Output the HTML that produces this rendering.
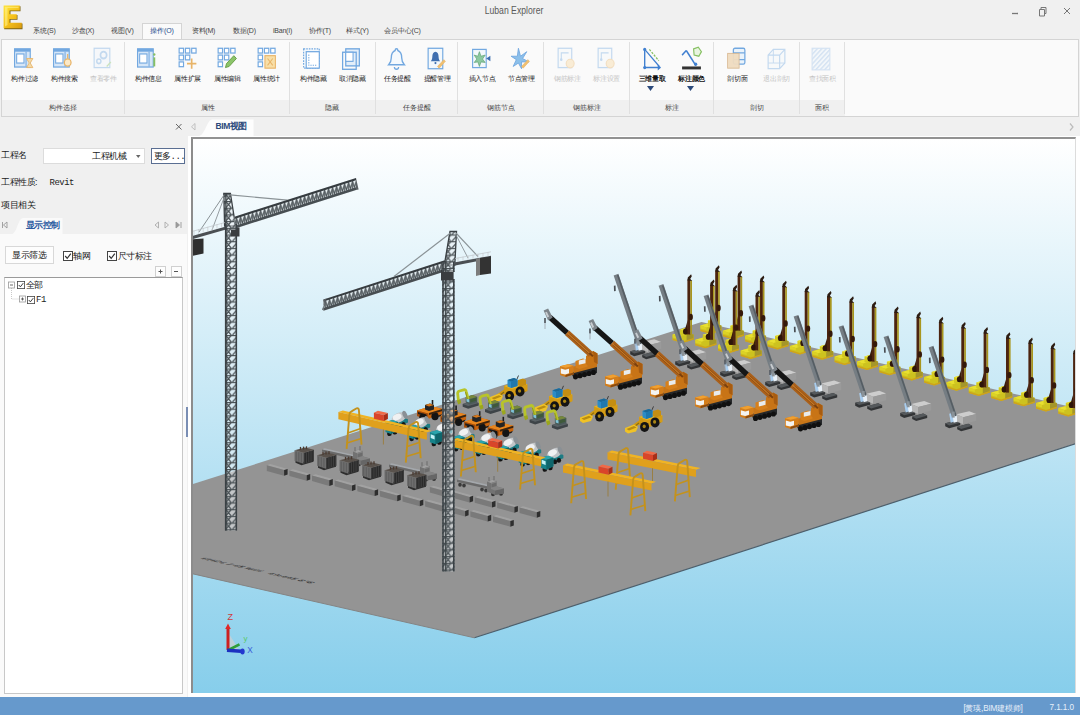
<!DOCTYPE html>
<html><head><meta charset="utf-8">
<style>
*{box-sizing:border-box;margin:0;padding:0}
html,body{width:1080px;height:715px;overflow:hidden;background:#f0f0f0;font-family:"Liberation Sans",sans-serif;font-size:9px;color:#333}
.abs{position:absolute}
#title{position:absolute;left:0;top:0;width:1080px;height:40px;background:#f0f0f0}
#title .t{position:absolute;left:464px;width:100px;top:5px;text-align:center;font-size:10.300px;color:#5a5a5a;transform:scaleX(.84);transform-origin:50% 50%;white-space:nowrap}
.menu{position:absolute;top:25px;height:12px;font-size:7px;color:#444;text-align:center;white-space:nowrap;width:44px;line-height:12px;letter-spacing:-0.200px}
#acttab{position:absolute;left:142px;top:23px;width:40px;height:18px;background:#fafafa;border:1px solid #d4d4d4;border-bottom:none}
#ribbon{position:absolute;left:1px;top:39px;width:1078px;height:78px;background:#fafafa;border:1px solid #d4d4d4}
#ribbon .strip{position:absolute;left:0;top:60px;height:16px;width:843px;background:#f0f0f0}
.sep{position:absolute;top:2px;width:1px;height:72px;background:#e0e0e0}
.btn{position:absolute;top:8px;width:40px;height:50px}
.btn svg{position:absolute;left:9.500px;top:-2px;width:23px;height:25px}
.btn .l{position:absolute;left:-5.500px;width:54px;top:25px;text-align:center;font-size:7px;color:#1c1c1c;white-space:nowrap;line-height:11px;letter-spacing:-0.350px}
.btn.dis .l{color:#c4c4c4}
.btn.dis svg{opacity:.4}
.gl{position:absolute;top:61.500px;width:60px;text-align:center;font-size:7px;color:#444;line-height:11px;white-space:nowrap;letter-spacing:0}
#tabrow{position:absolute;left:0;top:117px;width:1080px;height:19px;background:#f0f0f0}
#left{position:absolute;left:0;top:136px;width:187px;height:561px;background:#f0f0f0;font-family:"Liberation Sans",sans-serif}
.mono{font-family:"Liberation Mono",monospace}
#status{position:absolute;left:0;top:697px;width:1080px;height:18px;background:#6699cc;color:#e8f0fa;font-size:8px}
#vpwrap{position:absolute;left:188px;top:136px;width:892px;height:561px;background:#fff}
#vp{position:absolute;left:3px;top:1px;width:885px;height:555.5px;border-left:2px solid #8c8c8c;border-top:2px solid #929292;border-right:1px solid #dcdcdc;overflow:hidden}
</style></head><body>
<div id="title">
 <div class="t">Luban Explorer</div>
 <svg class="abs" style="left:3px;top:5px" width="21" height="25" viewBox="0 0 21 25">
<defs><linearGradient id="lg" x1="0" y1="0" x2="1" y2="1"><stop offset="0" stop-color="#ffe436"/><stop offset=".5" stop-color="#f6c21a"/><stop offset="1" stop-color="#d89a10"/></linearGradient></defs>
<path d="M1.200 1.200 L17.500 1.200 L17.500 6.300 L7.500 6.300 L7.500 10 L14.500 10 L14.500 14.800 L7.500 14.800 L7.500 18.600 L19.500 18.600 L19.500 24.300 L1.200 24.300 Z" fill="#7d6414"/>
<path d="M.6 .5 L16.800 .5 L16.800 5.500 L6.500 5.500 L6.500 9.300 L13.800 9.300 L13.800 14 L6.500 14 L6.500 17.800 L18.800 17.800 L18.800 23.300 L.6 23.300 Z" fill="url(#lg)"/>
<path d="M1.800 1.800 L15.500 1.800 L15.500 3 L4.500 3 L4.500 20 L2 21.500 Z" fill="#fff7a0" opacity=".5"/>
</svg>
 <svg class="abs" style="left:1005px;top:3px" width="72" height="18" viewBox="0 0 72 18">
<path d="M7 10.5h6" stroke="#777" stroke-width="1.3" fill="none"/>
<path d="M34.5 6.5h5v6.5h-5z M36 6.5v-2h5v6h-1.5" stroke="#777" stroke-width="1" fill="none"/>
<path d="M59 5l6 6M65 5l-6 6" stroke="#777" stroke-width="1" fill="none"/>
</svg>
</div>
<div id="acttab"></div>
<div class="menu" style="left:22.5px;">系统(S)</div><div class="menu" style="left:61.0px;">沙盘(X)</div><div class="menu" style="left:100.5px;">视图(V)</div><div class="menu" style="left:140.0px;color:#1e4a8c;">操作(O)</div><div class="menu" style="left:181.5px;">资料(M)</div><div class="menu" style="left:222.5px;">数据(D)</div><div class="menu" style="left:260.5px;">iBan(I)</div><div class="menu" style="left:298.0px;">协作(T)</div><div class="menu" style="left:335.5px;">样式(Y)</div><div class="menu" style="left:380.5px;">会员中心(C)</div>
<div id="ribbon">
 <div class="strip"></div>
 <div class="btn" style="left:1.2px"><svg viewBox="0 0 22 22" preserveAspectRatio="none"><rect x="1.5" y="2.5" width="15" height="16" fill="#d6e6f7" stroke="#72a8e0" stroke-width="1.1"/><rect x="1.5" y="2.5" width="15" height="2.5" fill="#72a8e0"/><rect x="3.5" y="7" width="7" height="8" fill="#fff" stroke="#72a8e0" stroke-width="1"/><path d="M12.5 5v13" stroke="#72a8e0" stroke-width="1"/><path d="M13 11h6l-2.2 3.5v1l2.2 3.5h-6l2.2-3.5v-1z" fill="#f3d9a8" stroke="#e8b468" stroke-width=".8"/></svg><div class="l">构件过滤</div></div><div class="btn" style="left:40.7px"><svg viewBox="0 0 22 22" preserveAspectRatio="none"><rect x="1.5" y="2.5" width="15" height="16" fill="#d6e6f7" stroke="#72a8e0" stroke-width="1.1"/><rect x="1.5" y="2.5" width="15" height="2.5" fill="#72a8e0"/><rect x="3.5" y="7" width="7" height="8" fill="#fff" stroke="#72a8e0" stroke-width="1"/><path d="M12.5 5v13" stroke="#72a8e0" stroke-width="1"/><circle cx="15" cy="14.5" r="3.2" fill="#fbe9c8" stroke="#e8b468" stroke-width="1.2"/><path d="M15 11V7" stroke="#e8b468" stroke-width="1.2"/></svg><div class="l">构件搜索</div></div><div class="btn dis" style="left:79.9px"><svg viewBox="0 0 22 22" preserveAspectRatio="none"><rect x="3" y="2" width="15" height="17" fill="#eef5fb" stroke="#72a8e0" stroke-width="1.1"/><circle cx="12" cy="8" r="3" fill="none" stroke="#72a8e0" stroke-width="1.6"/><circle cx="7.5" cy="13.5" r="2" fill="none" stroke="#72a8e0" stroke-width="1.4"/><path d="M15 18l4-4" stroke="#86c062" stroke-width="1.2"/></svg><div class="l">查看零件</div></div><div class="btn" style="left:124.9px"><svg viewBox="0 0 22 22" preserveAspectRatio="none"><rect x="1.5" y="2.5" width="15" height="16" fill="#d6e6f7" stroke="#72a8e0" stroke-width="1.1"/><rect x="1.5" y="2.5" width="15" height="2.5" fill="#72a8e0"/><rect x="3.5" y="7" width="7" height="8" fill="#fff" stroke="#72a8e0" stroke-width="1"/><path d="M12.5 5v13" stroke="#72a8e0" stroke-width="1"/><path d="M17.5 10v8" stroke="#86c062" stroke-width="1.8"/><circle cx="17.5" cy="7.5" r="1.1" fill="#86c062"/></svg><div class="l">构件信息</div></div><div class="btn" style="left:164.3px"><svg viewBox="0 0 22 22" preserveAspectRatio="none"><rect x="3" y="2" width="4.2" height="4.2" fill="#fff" stroke="#72a8e0" stroke-width="1.1"/><rect x="9" y="2" width="4.2" height="4.2" fill="#fff" stroke="#72a8e0" stroke-width="1.1"/><rect x="15" y="2" width="4.2" height="4.2" fill="#fff" stroke="#72a8e0" stroke-width="1.1"/><rect x="3" y="8" width="4.2" height="4.2" fill="#fff" stroke="#72a8e0" stroke-width="1.1"/><rect x="9" y="8" width="4.2" height="4.2" fill="#fff" stroke="#72a8e0" stroke-width="1.1"/><rect x="3" y="14" width="4.2" height="4.2" fill="#fff" stroke="#72a8e0" stroke-width="1.1"/><path d="M15 11v9M10.5 15.5h9" stroke="#e8b468" stroke-width="1.6"/></svg><div class="l">属性扩展</div></div><div class="btn" style="left:203.9px"><svg viewBox="0 0 22 22" preserveAspectRatio="none"><rect x="3" y="2" width="4.2" height="4.2" fill="#fff" stroke="#72a8e0" stroke-width="1.1"/><rect x="9" y="2" width="4.2" height="4.2" fill="#fff" stroke="#72a8e0" stroke-width="1.1"/><rect x="15" y="2" width="4.2" height="4.2" fill="#fff" stroke="#72a8e0" stroke-width="1.1"/><rect x="3" y="8" width="4.2" height="4.2" fill="#fff" stroke="#72a8e0" stroke-width="1.1"/><rect x="9" y="8" width="4.2" height="4.2" fill="#fff" stroke="#72a8e0" stroke-width="1.1"/><rect x="3" y="14" width="4.2" height="4.2" fill="#fff" stroke="#72a8e0" stroke-width="1.1"/><path d="M10 19l1-3.5 7-7 2.5 2.5-7 7z" fill="#8cc46a" stroke="#5f9a3e" stroke-width=".8"/></svg><div class="l">属性编辑</div></div><div class="btn" style="left:243.3px"><svg viewBox="0 0 22 22" preserveAspectRatio="none"><rect x="3" y="2" width="4.2" height="4.2" fill="#fff" stroke="#72a8e0" stroke-width="1.1"/><rect x="9" y="2" width="4.2" height="4.2" fill="#fff" stroke="#72a8e0" stroke-width="1.1"/><rect x="15" y="2" width="4.2" height="4.2" fill="#fff" stroke="#72a8e0" stroke-width="1.1"/><rect x="3" y="8" width="4.2" height="4.2" fill="#fff" stroke="#72a8e0" stroke-width="1.1"/><rect x="3" y="14" width="4.2" height="4.2" fill="#fff" stroke="#72a8e0" stroke-width="1.1"/><rect x="9.5" y="8.5" width="10" height="11" fill="#f8dfa8" stroke="#e8b468" stroke-width="1"/><path d="M12 11l5 6M17 11l-5 6" stroke="#e8b468" stroke-width="1"/></svg><div class="l">属性统计</div></div><div class="btn" style="left:289.7px"><svg viewBox="0 0 22 22" preserveAspectRatio="none"><rect x="2.5" y="2.5" width="15" height="17" fill="#f3f8fc" stroke="#72a8e0" stroke-width="1.1" stroke-dasharray="1.5 1"/><rect x="5" y="5" width="12.5" height="14.5" fill="#fff" stroke="#72a8e0" stroke-width="1.1"/><path d="M7.5 7.5v9.5h7.500" stroke="#72a8e0" stroke-width=".9" fill="none" stroke-dasharray="1.2 1"/></svg><div class="l">构件隐藏</div></div><div class="btn" style="left:328.9px"><svg viewBox="0 0 22 22" preserveAspectRatio="none"><rect x="5.500" y="2.5" width="13" height="15" fill="#e3eef9" stroke="#72a8e0" stroke-width="1.2"/><rect x="2.5" y="5.500" width="13" height="15" fill="none" stroke="#72a8e0" stroke-width="1.2"/><rect x="5.500" y="5.500" width="7" height="8" fill="#fff" stroke="#72a8e0" stroke-width="1"/></svg><div class="l">取消隐藏</div></div><div class="btn" style="left:373.9px"><svg viewBox="0 0 22 22" preserveAspectRatio="none"><path d="M11 2.5c-1 0-1.3.8-1.300 1.500C7 5 6 7.500 6 10.500c0 3-1 4.500-2.500 6h15c-1.500-1.500-2.500-3-2.500-6 0-3-1-5.500-3.700-6.500 0-.7-.3-1.500-1.300-1.500z" fill="#f4f9fd" stroke="#72a8e0" stroke-width="1.3"/><path d="M9 18.500a2 2 0 0 0 4 0" fill="none" stroke="#72a8e0" stroke-width="1.2"/></svg><div class="l">任务提醒</div></div><div class="btn" style="left:413.4px"><svg viewBox="0 0 22 22" preserveAspectRatio="none"><rect x="3" y="2" width="14" height="18" fill="#f3f8fc" stroke="#72a8e0" stroke-width="1.1"/><path d="M10 5c-2 0-3 2-3 4.500 0 2-.7 3-1.500 4h9c-.8-1-1.500-2-1.500-4C13 7 12 5 10 5z" fill="#3f6fb0"/><circle cx="10" cy="15" r="1" fill="#3f6fb0"/><path d="M12 18l6-6 1.500 1.500-6 6z" fill="#f0c070" stroke="#e8b468" stroke-width=".6"/></svg><div class="l">提醒管理</div></div><div class="btn" style="left:458.4px"><svg viewBox="0 0 22 22" preserveAspectRatio="none"><rect x="2.5" y="3" width="13" height="16" fill="#f3f8fc" stroke="#72a8e0" stroke-width="1.1"/><path d="M9 5l1.500 4 4-1-2.500 3.500 2.500 3-4-.5-1.500 4-1.500-4-3.500.5 2.500-3-2.500-3.500 3.500 1z" fill="#8cc8a0" stroke="#5aa070" stroke-width=".6"/><path d="M15.500 11l4-2.500v5z" fill="#3f6fb0"/></svg><div class="l">插入节点</div></div><div class="btn" style="left:497.8px"><svg viewBox="0 0 22 22" preserveAspectRatio="none"><path d="M9 2l2 7 6-4-4 6 6 3-7 0 0 6-3-5-5 3 3-6-5-3 6 0z" fill="#8cc0ea" stroke="#72a8e0" stroke-width=".8"/><path d="M12 18l6-6 1.500 1.500-6 6z" fill="#f0c070" stroke="#e8b468" stroke-width=".6"/></svg><div class="l">节点管理</div></div><div class="btn dis" style="left:543.7px"><svg viewBox="0 0 22 22" preserveAspectRatio="none"><rect x="3" y="2" width="13" height="17" fill="#f3f8fc" stroke="#72a8e0" stroke-width="1.1"/><path d="M6 12V6h7" stroke="#72a8e0" stroke-width="1" fill="none"/><circle cx="6" cy="12" r="1.200" fill="#72a8e0"/><circle cx="14.500" cy="15.500" r="3.800" fill="#f8d9a0" stroke="#e8b468" stroke-width="1"/></svg><div class="l">钢筋标注</div></div><div class="btn dis" style="left:583.1px"><svg viewBox="0 0 22 22" preserveAspectRatio="none"><rect x="3" y="2" width="13" height="17" fill="#f3f8fc" stroke="#72a8e0" stroke-width="1.1"/><path d="M6 12V6h7" stroke="#72a8e0" stroke-width="1" fill="none"/><circle cx="6" cy="12" r="1.200" fill="#72a8e0"/><circle cx="14.500" cy="15.500" r="3.800" fill="#f8d9a0" stroke="#e8b468" stroke-width="1"/></svg><div class="l">标注设置</div></div><div class="btn" style="left:628.4px"><svg viewBox="0 0 22 22" preserveAspectRatio="none"><path d="M4.500 3v16h15" stroke="#3f7fd0" stroke-width="1.300" fill="none"/><path d="M4.500 3l14 15" stroke="#3f7fd0" stroke-width="1.200"/><path d="M9 3l9 10" stroke="#86c062" stroke-width="1.200" stroke-dasharray="2 1.200"/><circle cx="4.500" cy="3" r="1.500" fill="#3f7fd0"/><circle cx="4.500" cy="19" r="1.500" fill="#3f7fd0"/><path d="M17 16.500l3 2.500-3 2.500z" fill="#3f7fd0"/></svg><div class="l" style="color:#111;font-weight:bold">三维量取</div><svg style="left:16.500px;top:38px;width:7px;height:5px" viewBox="0 0 7 5"><path d="M0 0h7L3.500 5z" fill="#2c4a7c"/></svg></div><div class="btn" style="left:668.2px"><svg viewBox="0 0 22 22" preserveAspectRatio="none"><rect x="2" y="18" width="18" height="2.600" fill="#333"/><path d="M15 17L6 4" stroke="#3f7fd0" stroke-width="1.400"/><path d="M6 4l-4 4" stroke="#3f7fd0" stroke-width="1.400"/><circle cx="15" cy="16" r="1.500" fill="#3f7fd0"/><path d="M13 2.500l4.500-1.500 3 4-2.500 4-4.500-1z" fill="#e8f4e0" stroke="#86c062" stroke-width="1.100"/></svg><div class="l" style="color:#111;font-weight:bold">标注颜色</div><svg style="left:16.500px;top:38px;width:7px;height:5px" viewBox="0 0 7 5"><path d="M0 0h7L3.500 5z" fill="#2c4a7c"/></svg></div><div class="btn" style="left:713.8px"><svg viewBox="0 0 22 22" preserveAspectRatio="none"><rect x="8" y="2" width="11" height="14" rx="1.500" fill="#eaf3fb" stroke="#72a8e0" stroke-width="1.200"/><path d="M8 6h11M8 12h11" stroke="#72a8e0" stroke-width="1"/><rect x="2.500" y="6.500" width="11" height="13" fill="#f0dcc0" stroke="#d8b890" stroke-width=".8" opacity=".95"/></svg><div class="l">剖切面</div></div><div class="btn dis" style="left:753.2px"><svg viewBox="0 0 22 22" preserveAspectRatio="none"><path d="M3 8l5-5h11v12l-5 5H3z M3 8h11v12 M14 8l5-5" fill="#f3f8fc" stroke="#72a8e0" stroke-width="1.100"/><path d="M8 3v12H3M8 15h11" stroke="#72a8e0" stroke-width=".8" fill="none"/></svg><div class="l">退出剖切</div></div><div class="btn dis" style="left:798.8px"><svg viewBox="0 0 22 22" preserveAspectRatio="none"><defs><pattern id="hat" width="3" height="3" patternUnits="userSpaceOnUse" patternTransform="rotate(-45)"><rect width="3" height="1.300" fill="#9cc0e8"/></pattern></defs><rect x="2" y="2" width="17" height="19" fill="#eaf3fb"/><rect x="2" y="2" width="17" height="19" fill="url(#hat)" stroke="#9cc0e8" stroke-width="1"/></svg><div class="l">查找面积</div></div><div class="sep" style="left:122px"></div><div class="sep" style="left:287px"></div><div class="sep" style="left:373px"></div><div class="sep" style="left:455px"></div><div class="sep" style="left:541px"></div><div class="sep" style="left:627px"></div><div class="sep" style="left:711px"></div><div class="sep" style="left:797px"></div><div class="sep" style="left:842px"></div><div class="gl" style="left:31.0px">构件选择</div><div class="gl" style="left:176.0px">属性</div><div class="gl" style="left:299.5px">隐藏</div><div class="gl" style="left:385.0px">任务提醒</div><div class="gl" style="left:469.0px">钢筋节点</div><div class="gl" style="left:555.0px">钢筋标注</div><div class="gl" style="left:640.0px">标注</div><div class="gl" style="left:725.0px">剖切</div><div class="gl" style="left:790.0px">面积</div>
</div>
<div id="tabrow">
 <svg class="abs" style="left:170px;top:2px" width="34" height="16" viewBox="0 0 34 16"><path d="M6 5l5.500 5.500M11.500 5L6 10.500" stroke="#666" stroke-width="1" fill="none"/><path d="M25 4.500v6.500l-3.500-3.200z" fill="none" stroke="#c0c0c0" stroke-width="1"/></svg>
<svg class="abs" style="left:198.500px;top:1px" width="60" height="18" viewBox="0 0 60 18"><path d="M0 18C6 17 8 2 13 1.500H54.500V18z" fill="#fdfdfd"/></svg>
<div class="abs" style="left:215.500px;top:4px;width:40px;font-size:8.500px;font-weight:bold;color:#2c4a7c;white-space:nowrap;letter-spacing:-0.4px">BIM视图</div>
<svg class="abs" style="left:1066px;top:4px" width="10" height="12" viewBox="0 0 10 12"><path d="M4 2.500l3 3.500-3 3.500" fill="none" stroke="#bbb" stroke-width="1.200"/></svg>
</div>
<div id="left">
 
<div class="abs" style="left:1px;top:13px;font-size:9px;color:#222;white-space:nowrap;letter-spacing:-0.5px">工程名</div>
<div class="abs" style="left:42.500px;top:12px;width:102px;height:16px;background:#fff;border:1px solid #dcdcdc"></div>
<div class="abs" style="left:92px;top:13.500px;font-size:9px;color:#222;white-space:nowrap;letter-spacing:-0.5px">工程机械</div>
<svg class="abs" style="left:136px;top:18.500px" width="4.500" height="3" viewBox="0 0 6 4"><path d="M0 0h6L3 4z" fill="#666"/></svg>
<div class="abs" style="left:150.500px;top:11.500px;width:34px;height:16.500px;background:#fff;border:1px solid #5a6e92;font-size:9px;color:#222;padding:1.500px 0 0 2px;white-space:nowrap;letter-spacing:-0.5px">更多<span class="mono">...</span></div>
<div class="abs" style="left:1px;top:40px;font-size:9px;color:#222;white-space:nowrap;letter-spacing:-0.5px;width:46px;overflow:hidden">工程性质:</div>
<div class="abs" style="left:49.500px;top:41.500px;font-size:9px;color:#222;white-space:nowrap;letter-spacing:-0.5px;font-family:'Liberation Mono',monospace">Revit</div>
<div class="abs" style="left:1px;top:63px;font-size:9px;color:#222;white-space:nowrap;letter-spacing:-0.5px">项目相关</div>
<div class="abs" style="left:0;top:97.500px;width:187px;height:463.500px;background:#fafafa"></div>
<svg class="abs" style="left:0;top:81px" width="187" height="17" viewBox="0 0 187 17">
<path d="M12 17C17 16 18 1.500 23 1H62.500V17z" fill="#fafafa"/>
<path d="M2.500 5v6M7 5v6l-3.500-3z" stroke="#999" stroke-width=".9" fill="none"/>
<path d="M158.500 5v6l-3.500-3z M165 5v6l3.500-3z" stroke="#aaa" stroke-width=".9" fill="none"/>
<path d="M176 5v6l3.500-3z M181 5v6" stroke="#999" stroke-width=".9" fill="#999"/></svg>
<div class="abs" style="left:26px;top:84px;font-size:8.500px;font-weight:bold;color:#2c5aa0;white-space:nowrap;letter-spacing:-0.6px;font-family:'Liberation Sans',sans-serif">显示控制</div>
<div class="abs" style="left:4.500px;top:110px;width:49.500px;height:18px;background:#fdfdfd;border:1px solid #d8d8d8;font-size:9px;color:#222;text-align:center;line-height:16px;white-space:nowrap;letter-spacing:-0.5px">显示筛选</div>
<svg class="abs" style="left:62.5px;top:114.5px" width="10" height="10" viewBox="0 0 10 10"><rect x=".5" y=".5" width="9" height="9" fill="#fff" stroke="#444" stroke-width="1"/><path d="M2.200 5l2 2.300 3.600-4.600" fill="none" stroke="#333" stroke-width="1.200"/></svg><div class="abs" style="left:73px;top:114px;font-size:9px;color:#222;white-space:nowrap;letter-spacing:-0.5px">轴网</div>
<svg class="abs" style="left:107.0px;top:114.5px" width="10" height="10" viewBox="0 0 10 10"><rect x=".5" y=".5" width="9" height="9" fill="#fff" stroke="#444" stroke-width="1"/><path d="M2.200 5l2 2.300 3.600-4.600" fill="none" stroke="#333" stroke-width="1.200"/></svg><div class="abs" style="left:117.500px;top:114px;font-size:9px;color:#222;white-space:nowrap;letter-spacing:-0.5px">尺寸标注</div>
<div class="abs" style="left:154.500px;top:129.500px;width:11px;height:11px;background:#fdfdfd;border:1px solid #d0d0d0"></div>
<div class="abs" style="left:170.500px;top:129.500px;width:11px;height:11px;background:#fdfdfd;border:1px solid #d0d0d0"></div>
<svg class="abs" style="left:154.500px;top:129.500px" width="28" height="11" viewBox="0 0 28 11"><path d="M3.500 5.500h4M5.500 3.500v4M19 5.500h4" stroke="#555" stroke-width="1"/></svg>
<div class="abs" style="left:3.500px;top:140.500px;width:179.500px;height:417px;background:#fff;border:1px solid #c8c8c8;border-top:1.500px solid #9a9a9a"></div>
<svg class="abs" style="left:7px;top:144px" width="30" height="26" viewBox="0 0 30 26"><path d="M4.500 8v11h8" stroke="#bbb" stroke-width=".8" fill="none" stroke-dasharray="1 1"/><rect x="1.500" y="2" width="6" height="6" fill="#fff" stroke="#999" stroke-width=".8"/><path d="M3 5h3" stroke="#444" stroke-width=".8"/><rect x="12.500" y="16" width="6" height="6" fill="#fff" stroke="#999" stroke-width=".8"/><path d="M14 19h3M15.500 17.500v3" stroke="#444" stroke-width=".8"/></svg>
<svg class="abs" style="left:17.0px;top:144.5px" width="8" height="8" viewBox="0 0 10 10"><rect x=".5" y=".5" width="9" height="9" fill="#fff" stroke="#444" stroke-width="1"/><path d="M2.200 5l2 2.300 3.600-4.600" fill="none" stroke="#333" stroke-width="1.200"/></svg><div class="abs" style="left:25.500px;top:143px;font-size:9px;color:#222;white-space:nowrap;letter-spacing:-0.5px">全部</div>
<svg class="abs" style="left:27.0px;top:159.5px" width="8" height="8" viewBox="0 0 10 10"><rect x=".5" y=".5" width="9" height="9" fill="#fff" stroke="#444" stroke-width="1"/><path d="M2.200 5l2 2.300 3.600-4.600" fill="none" stroke="#333" stroke-width="1.200"/></svg><div class="abs" style="left:36px;top:158.500px;font-size:9px;color:#222;white-space:nowrap;letter-spacing:-0.5px;font-family:'Liberation Mono',monospace">F1</div>
<div class="abs" style="left:185.500px;top:271px;width:2.500px;height:30px;background:#7a8eb4"></div>

</div>
<div id="vpwrap"><div id="vp">
<svg style="position:absolute;left:-193px;top:-139px" width="1080" height="715" viewBox="0 0 1080 715"><defs>
<linearGradient id="sky" x1="0" y1="139" x2="0" y2="692" gradientUnits="userSpaceOnUse"><stop offset="0" stop-color="#ffffff"/><stop offset="1" stop-color="#87ceeb"/></linearGradient>
<pattern id="mast" width="12.200" height="6.700" patternUnits="userSpaceOnUse">
 <rect width="12.200" height="6.700" fill="#e8eef1" fill-opacity=".55"/>
 <path d="M0 .5H12.200" stroke="#485054" stroke-width="1.300"/>
 <path d="M.700 6.700L6.300 .5M6.300 .5L11.500 6.700M11.500 .5L6.300 6.700" stroke="#4a5256" stroke-width="1.200" fill="none"/>
 <path d="M6.300 0V6.700" stroke="#3e4649" stroke-width="1.500"/>
</pattern>
<pattern id="jib" width="4" height="12" patternUnits="userSpaceOnUse">
 <rect width="4" height="12" fill="#e4ebee" fill-opacity=".8"/>
 <path d="M0 9.500L2 2.500L4 9.500" stroke="#4a5256" stroke-width="1.200" fill="none"/>
 <path d="M2 2V10" stroke="#596165" stroke-width=".8" fill="none"/>
</pattern>
</defs><rect x="180.0" y="130.0" width="900.0" height="570.0" fill="url(#sky)" />
<polygon points="190.0,485.0 701.5,322.0 1080.0,409.0 1080.0,442.2 474.4,637.8 190.0,573.2" fill="#949494" />
<line x1="474.4" y1="637.8" x2="1080.0" y2="442.2" stroke="#4d5f6c" stroke-width="1.20" />
<line x1="190.0" y1="573.2" x2="474.4" y2="637.8" stroke="#848484" stroke-width="1.00" />
<g transform="matrix(1,0.2273,-0.95,0.22,199.500,558.500)" fill="#3c3c3c" font-family="Liberation Sans" font-style="italic" font-weight="bold" font-size="8"><text x="0" y="0" textLength="60" lengthAdjust="spacingAndGlyphs">#1#2# 7 #5 %## </text><text x="67" y="0" textLength="44" lengthAdjust="spacingAndGlyphs">#%##5 8"8</text></g>
<polygon points="700.4,325.5 709.4,323.0 721.4,325.5 721.4,330.5 710.4,334.0 700.4,331.0" fill="#cdc21f" />
<polygon points="700.4,325.5 708.4,323.3 714.4,324.8 706.4,327.5" fill="#e8e030" />
<polygon points="700.4,325.5 706.4,327.5 706.4,330.0 700.4,328.5" fill="#dcd226" />
<polygon points="714.4,324.0 721.4,325.5 721.4,330.5 714.4,332.5" fill="#a4962a" />
<polygon points="700.4,329.5 710.4,332.5 721.4,329.0 721.4,330.5 710.4,334.0 700.4,331.0" fill="#cfa21c" />
<polygon points="707.9,320.5 712.9,319.0 716.4,320.0 716.4,325.5 711.4,327.0 707.9,326.0" fill="#d2c822" />
<polygon points="707.9,320.5 712.9,319.0 716.4,320.0 711.4,321.5" fill="#ece63a" />
<polygon points="711.4,325.0 715.6,311.0 715.6,325.5" fill="#3a1c0c" />
<ellipse cx="713.4" cy="322.5" rx="2.6" ry="3.0" fill="#2e160a" />
<rect x="715.2" y="270.5" width="3.0" height="55.0" fill="#4c2410" />
<rect x="718.1" y="271.5" width="1.7" height="54.0" fill="#a8961e" />
<polygon points="715.2,271.5 715.6,268.5 718.9,265.2 719.6,267.3 718.0,270.0 720.0,272.0" fill="#2c1c12" />
<ellipse cx="718.6" cy="308.0" rx="2.1" ry="3.2" fill="#34190a" />
<polygon points="722.8,330.7 731.8,328.2 743.8,330.7 743.8,335.7 732.8,339.2 722.8,336.2" fill="#cdc21f" />
<polygon points="722.8,330.7 730.8,328.5 736.8,330.0 728.8,332.7" fill="#e8e030" />
<polygon points="722.8,330.7 728.8,332.7 728.8,335.2 722.8,333.7" fill="#dcd226" />
<polygon points="736.8,329.2 743.8,330.7 743.8,335.7 736.8,337.7" fill="#a4962a" />
<polygon points="722.8,334.7 732.8,337.7 743.8,334.2 743.8,335.7 732.8,339.2 722.8,336.2" fill="#cfa21c" />
<polygon points="730.3,325.7 735.3,324.2 738.8,325.2 738.8,330.7 733.8,332.2 730.3,331.2" fill="#d2c822" />
<polygon points="730.3,325.7 735.3,324.2 738.8,325.2 733.8,326.7" fill="#ece63a" />
<polygon points="733.8,330.2 738.0,316.2 738.0,330.7" fill="#3a1c0c" />
<ellipse cx="735.8" cy="327.7" rx="2.6" ry="3.0" fill="#2e160a" />
<rect x="737.6" y="275.7" width="3.0" height="55.0" fill="#4c2410" />
<rect x="740.5" y="276.7" width="1.7" height="54.0" fill="#a8961e" />
<polygon points="737.6,276.7 738.0,273.7 741.3,270.4 742.0,272.5 740.4,275.2 742.4,277.2" fill="#2c1c12" />
<ellipse cx="741.0" cy="313.2" rx="2.1" ry="3.2" fill="#34190a" />
<polygon points="745.1,335.8 754.1,333.3 766.1,335.8 766.1,340.8 755.1,344.3 745.1,341.3" fill="#cdc21f" />
<polygon points="745.1,335.8 753.1,333.6 759.1,335.1 751.1,337.8" fill="#e8e030" />
<polygon points="745.1,335.8 751.1,337.8 751.1,340.3 745.1,338.8" fill="#dcd226" />
<polygon points="759.1,334.3 766.1,335.8 766.1,340.8 759.1,342.8" fill="#a4962a" />
<polygon points="745.1,339.8 755.1,342.8 766.1,339.3 766.1,340.8 755.1,344.3 745.1,341.3" fill="#cfa21c" />
<polygon points="752.6,330.8 757.6,329.3 761.1,330.3 761.1,335.8 756.1,337.3 752.6,336.3" fill="#d2c822" />
<polygon points="752.6,330.8 757.6,329.3 761.1,330.3 756.1,331.8" fill="#ece63a" />
<polygon points="756.1,335.3 760.3,321.3 760.3,335.8" fill="#3a1c0c" />
<ellipse cx="758.1" cy="332.8" rx="2.6" ry="3.0" fill="#2e160a" />
<rect x="759.9" y="280.8" width="3.0" height="55.0" fill="#4c2410" />
<rect x="762.8" y="281.8" width="1.7" height="54.0" fill="#a8961e" />
<polygon points="759.9,281.8 760.3,278.8 763.6,275.5 764.3,277.6 762.7,280.3 764.7,282.3" fill="#2c1c12" />
<ellipse cx="763.3" cy="318.3" rx="2.1" ry="3.2" fill="#34190a" />
<polygon points="767.5,341.0 776.5,338.5 788.5,341.0 788.5,346.0 777.5,349.5 767.5,346.5" fill="#cdc21f" />
<polygon points="767.5,341.0 775.5,338.8 781.5,340.3 773.5,343.0" fill="#e8e030" />
<polygon points="767.5,341.0 773.5,343.0 773.5,345.5 767.5,344.0" fill="#dcd226" />
<polygon points="781.5,339.5 788.5,341.0 788.5,346.0 781.5,348.0" fill="#a4962a" />
<polygon points="767.5,345.0 777.5,348.0 788.5,344.5 788.5,346.0 777.5,349.5 767.5,346.5" fill="#cfa21c" />
<polygon points="775.0,336.0 780.0,334.5 783.5,335.5 783.5,341.0 778.5,342.5 775.0,341.5" fill="#d2c822" />
<polygon points="775.0,336.0 780.0,334.5 783.5,335.5 778.5,337.0" fill="#ece63a" />
<polygon points="778.5,340.5 782.7,326.5 782.7,341.0" fill="#3a1c0c" />
<ellipse cx="780.5" cy="338.0" rx="2.6" ry="3.0" fill="#2e160a" />
<rect x="782.3" y="286.0" width="3.0" height="55.0" fill="#4c2410" />
<rect x="785.2" y="287.0" width="1.7" height="54.0" fill="#a8961e" />
<polygon points="782.3,287.0 782.7,284.0 786.0,280.7 786.7,282.8 785.1,285.5 787.1,287.5" fill="#2c1c12" />
<ellipse cx="785.7" cy="323.5" rx="2.1" ry="3.2" fill="#34190a" />
<polygon points="789.9,346.1 798.9,343.6 810.9,346.1 810.9,351.1 799.9,354.6 789.9,351.6" fill="#cdc21f" />
<polygon points="789.9,346.1 797.9,343.9 803.9,345.4 795.9,348.1" fill="#e8e030" />
<polygon points="789.9,346.1 795.9,348.1 795.9,350.6 789.9,349.1" fill="#dcd226" />
<polygon points="803.9,344.6 810.9,346.1 810.9,351.1 803.9,353.1" fill="#a4962a" />
<polygon points="789.9,350.1 799.9,353.1 810.9,349.6 810.9,351.1 799.9,354.6 789.9,351.6" fill="#cfa21c" />
<polygon points="797.4,341.1 802.4,339.6 805.9,340.6 805.9,346.1 800.9,347.6 797.4,346.6" fill="#d2c822" />
<polygon points="797.4,341.1 802.4,339.6 805.9,340.6 800.9,342.1" fill="#ece63a" />
<polygon points="800.9,345.6 805.1,331.6 805.1,346.1" fill="#3a1c0c" />
<ellipse cx="802.9" cy="343.1" rx="2.6" ry="3.0" fill="#2e160a" />
<rect x="804.7" y="291.1" width="3.0" height="55.0" fill="#4c2410" />
<rect x="807.6" y="292.1" width="1.7" height="54.0" fill="#a8961e" />
<polygon points="804.7,292.1 805.1,289.1 808.4,285.8 809.1,287.9 807.5,290.6 809.5,292.6" fill="#2c1c12" />
<ellipse cx="808.1" cy="328.6" rx="2.1" ry="3.2" fill="#34190a" />
<polygon points="812.2,351.3 821.2,348.8 833.2,351.3 833.2,356.3 822.2,359.8 812.2,356.8" fill="#cdc21f" />
<polygon points="812.2,351.3 820.2,349.1 826.2,350.6 818.2,353.3" fill="#e8e030" />
<polygon points="812.2,351.3 818.2,353.3 818.2,355.8 812.2,354.3" fill="#dcd226" />
<polygon points="826.2,349.8 833.2,351.3 833.2,356.3 826.2,358.3" fill="#a4962a" />
<polygon points="812.2,355.3 822.2,358.3 833.2,354.8 833.2,356.3 822.2,359.8 812.2,356.8" fill="#cfa21c" />
<polygon points="819.8,346.3 824.8,344.8 828.2,345.8 828.2,351.3 823.2,352.8 819.8,351.8" fill="#d2c822" />
<polygon points="819.8,346.3 824.8,344.8 828.2,345.8 823.2,347.3" fill="#ece63a" />
<polygon points="823.2,350.8 827.5,336.8 827.5,351.3" fill="#3a1c0c" />
<ellipse cx="825.2" cy="348.3" rx="2.6" ry="3.0" fill="#2e160a" />
<rect x="827.0" y="296.3" width="3.0" height="55.0" fill="#4c2410" />
<rect x="830.0" y="297.3" width="1.7" height="54.0" fill="#a8961e" />
<polygon points="827.0,297.3 827.5,294.3 830.8,291.0 831.5,293.1 829.9,295.8 831.9,297.8" fill="#2c1c12" />
<ellipse cx="830.5" cy="333.8" rx="2.1" ry="3.2" fill="#34190a" />
<polygon points="834.6,356.5 843.6,354.0 855.6,356.5 855.6,361.5 844.6,365.0 834.6,362.0" fill="#cdc21f" />
<polygon points="834.6,356.5 842.6,354.3 848.6,355.8 840.6,358.5" fill="#e8e030" />
<polygon points="834.6,356.5 840.6,358.5 840.6,361.0 834.6,359.5" fill="#dcd226" />
<polygon points="848.6,355.0 855.6,356.5 855.6,361.5 848.6,363.5" fill="#a4962a" />
<polygon points="834.6,360.5 844.6,363.5 855.6,360.0 855.6,361.5 844.6,365.0 834.6,362.0" fill="#cfa21c" />
<polygon points="842.1,351.5 847.1,350.0 850.6,351.0 850.6,356.5 845.6,358.0 842.1,357.0" fill="#d2c822" />
<polygon points="842.1,351.5 847.1,350.0 850.6,351.0 845.6,352.5" fill="#ece63a" />
<polygon points="845.6,356.0 849.8,342.0 849.8,356.5" fill="#3a1c0c" />
<ellipse cx="847.6" cy="353.5" rx="2.6" ry="3.0" fill="#2e160a" />
<rect x="849.4" y="301.5" width="3.0" height="55.0" fill="#4c2410" />
<rect x="852.3" y="302.5" width="1.7" height="54.0" fill="#a8961e" />
<polygon points="849.4,302.5 849.8,299.5 853.1,296.2 853.8,298.3 852.2,301.0 854.2,303.0" fill="#2c1c12" />
<ellipse cx="852.8" cy="339.0" rx="2.1" ry="3.2" fill="#34190a" />
<polygon points="857.0,361.6 866.0,359.1 878.0,361.6 878.0,366.6 867.0,370.1 857.0,367.1" fill="#cdc21f" />
<polygon points="857.0,361.6 865.0,359.4 871.0,360.9 863.0,363.6" fill="#e8e030" />
<polygon points="857.0,361.6 863.0,363.6 863.0,366.1 857.0,364.6" fill="#dcd226" />
<polygon points="871.0,360.1 878.0,361.6 878.0,366.6 871.0,368.6" fill="#a4962a" />
<polygon points="857.0,365.6 867.0,368.6 878.0,365.1 878.0,366.6 867.0,370.1 857.0,367.1" fill="#cfa21c" />
<polygon points="864.5,356.6 869.5,355.1 873.0,356.1 873.0,361.6 868.0,363.1 864.5,362.1" fill="#d2c822" />
<polygon points="864.5,356.6 869.5,355.1 873.0,356.1 868.0,357.6" fill="#ece63a" />
<polygon points="868.0,361.1 872.2,347.1 872.2,361.6" fill="#3a1c0c" />
<ellipse cx="870.0" cy="358.6" rx="2.6" ry="3.0" fill="#2e160a" />
<rect x="871.8" y="306.6" width="3.0" height="55.0" fill="#4c2410" />
<rect x="874.7" y="307.6" width="1.7" height="54.0" fill="#a8961e" />
<polygon points="871.8,307.6 872.2,304.6 875.5,301.3 876.2,303.4 874.6,306.1 876.6,308.1" fill="#2c1c12" />
<ellipse cx="875.2" cy="344.1" rx="2.1" ry="3.2" fill="#34190a" />
<polygon points="879.4,366.8 888.4,364.3 900.4,366.8 900.4,371.8 889.4,375.3 879.4,372.3" fill="#cdc21f" />
<polygon points="879.4,366.8 887.4,364.6 893.4,366.1 885.4,368.8" fill="#e8e030" />
<polygon points="879.4,366.8 885.4,368.8 885.4,371.3 879.4,369.8" fill="#dcd226" />
<polygon points="893.4,365.3 900.4,366.8 900.4,371.8 893.4,373.8" fill="#a4962a" />
<polygon points="879.4,370.8 889.4,373.8 900.4,370.3 900.4,371.8 889.4,375.3 879.4,372.3" fill="#cfa21c" />
<polygon points="886.9,361.8 891.9,360.3 895.4,361.3 895.4,366.8 890.4,368.3 886.9,367.3" fill="#d2c822" />
<polygon points="886.9,361.8 891.9,360.3 895.4,361.3 890.4,362.8" fill="#ece63a" />
<polygon points="890.4,366.3 894.6,352.3 894.6,366.8" fill="#3a1c0c" />
<ellipse cx="892.4" cy="363.8" rx="2.6" ry="3.0" fill="#2e160a" />
<rect x="894.2" y="311.8" width="3.0" height="55.0" fill="#4c2410" />
<rect x="897.1" y="312.8" width="1.7" height="54.0" fill="#a8961e" />
<polygon points="894.2,312.8 894.6,309.8 897.9,306.5 898.6,308.6 897.0,311.3 899.0,313.3" fill="#2c1c12" />
<ellipse cx="897.6" cy="349.3" rx="2.1" ry="3.2" fill="#34190a" />
<polygon points="901.7,371.9 910.7,369.4 922.7,371.9 922.7,376.9 911.7,380.4 901.7,377.4" fill="#cdc21f" />
<polygon points="901.7,371.9 909.7,369.7 915.7,371.2 907.7,373.9" fill="#e8e030" />
<polygon points="901.7,371.9 907.7,373.9 907.7,376.4 901.7,374.9" fill="#dcd226" />
<polygon points="915.7,370.4 922.7,371.9 922.7,376.9 915.7,378.9" fill="#a4962a" />
<polygon points="901.7,375.9 911.7,378.9 922.7,375.4 922.7,376.9 911.7,380.4 901.7,377.4" fill="#cfa21c" />
<polygon points="909.2,366.9 914.2,365.4 917.7,366.4 917.7,371.9 912.7,373.4 909.2,372.4" fill="#d2c822" />
<polygon points="909.2,366.9 914.2,365.4 917.7,366.4 912.7,367.9" fill="#ece63a" />
<polygon points="912.7,371.4 916.9,357.4 916.9,371.9" fill="#3a1c0c" />
<ellipse cx="914.7" cy="368.9" rx="2.6" ry="3.0" fill="#2e160a" />
<rect x="916.5" y="316.9" width="3.0" height="55.0" fill="#4c2410" />
<rect x="919.4" y="317.9" width="1.7" height="54.0" fill="#a8961e" />
<polygon points="916.5,317.9 916.9,314.9 920.2,311.6 920.9,313.7 919.3,316.4 921.3,318.4" fill="#2c1c12" />
<ellipse cx="919.9" cy="354.4" rx="2.1" ry="3.2" fill="#34190a" />
<polygon points="924.1,377.1 933.1,374.6 945.1,377.1 945.1,382.1 934.1,385.6 924.1,382.6" fill="#cdc21f" />
<polygon points="924.1,377.1 932.1,374.9 938.1,376.4 930.1,379.1" fill="#e8e030" />
<polygon points="924.1,377.1 930.1,379.1 930.1,381.6 924.1,380.1" fill="#dcd226" />
<polygon points="938.1,375.6 945.1,377.1 945.1,382.1 938.1,384.1" fill="#a4962a" />
<polygon points="924.1,381.1 934.1,384.1 945.1,380.6 945.1,382.1 934.1,385.6 924.1,382.6" fill="#cfa21c" />
<polygon points="931.6,372.1 936.6,370.6 940.1,371.6 940.1,377.1 935.1,378.6 931.6,377.6" fill="#d2c822" />
<polygon points="931.6,372.1 936.6,370.6 940.1,371.6 935.1,373.1" fill="#ece63a" />
<polygon points="935.1,376.6 939.3,362.6 939.3,377.1" fill="#3a1c0c" />
<ellipse cx="937.1" cy="374.1" rx="2.6" ry="3.0" fill="#2e160a" />
<rect x="938.9" y="322.1" width="3.0" height="55.0" fill="#4c2410" />
<rect x="941.8" y="323.1" width="1.7" height="54.0" fill="#a8961e" />
<polygon points="938.9,323.1 939.3,320.1 942.6,316.8 943.3,318.9 941.7,321.6 943.7,323.6" fill="#2c1c12" />
<ellipse cx="942.3" cy="359.6" rx="2.1" ry="3.2" fill="#34190a" />
<polygon points="946.5,382.3 955.5,379.8 967.5,382.3 967.5,387.3 956.5,390.8 946.5,387.8" fill="#cdc21f" />
<polygon points="946.5,382.3 954.5,380.1 960.5,381.6 952.5,384.3" fill="#e8e030" />
<polygon points="946.5,382.3 952.5,384.3 952.5,386.8 946.5,385.3" fill="#dcd226" />
<polygon points="960.5,380.8 967.5,382.3 967.5,387.3 960.5,389.3" fill="#a4962a" />
<polygon points="946.5,386.3 956.5,389.3 967.5,385.8 967.5,387.3 956.5,390.8 946.5,387.8" fill="#cfa21c" />
<polygon points="954.0,377.3 959.0,375.8 962.5,376.8 962.5,382.3 957.5,383.8 954.0,382.8" fill="#d2c822" />
<polygon points="954.0,377.3 959.0,375.8 962.5,376.8 957.5,378.3" fill="#ece63a" />
<polygon points="957.5,381.8 961.7,367.8 961.7,382.3" fill="#3a1c0c" />
<ellipse cx="959.5" cy="379.3" rx="2.6" ry="3.0" fill="#2e160a" />
<rect x="961.3" y="327.3" width="3.0" height="55.0" fill="#4c2410" />
<rect x="964.2" y="328.3" width="1.7" height="54.0" fill="#a8961e" />
<polygon points="961.3,328.3 961.7,325.3 965.0,322.0 965.7,324.1 964.1,326.8 966.1,328.8" fill="#2c1c12" />
<ellipse cx="964.7" cy="364.8" rx="2.1" ry="3.2" fill="#34190a" />
<polygon points="968.8,387.4 977.8,384.9 989.8,387.4 989.8,392.4 978.8,395.9 968.8,392.9" fill="#cdc21f" />
<polygon points="968.8,387.4 976.8,385.2 982.8,386.7 974.8,389.4" fill="#e8e030" />
<polygon points="968.8,387.4 974.8,389.4 974.8,391.9 968.8,390.4" fill="#dcd226" />
<polygon points="982.8,385.9 989.8,387.4 989.8,392.4 982.8,394.4" fill="#a4962a" />
<polygon points="968.8,391.4 978.8,394.4 989.8,390.9 989.8,392.4 978.8,395.9 968.8,392.9" fill="#cfa21c" />
<polygon points="976.3,382.4 981.3,380.9 984.8,381.9 984.8,387.4 979.8,388.9 976.3,387.9" fill="#d2c822" />
<polygon points="976.3,382.4 981.3,380.9 984.8,381.9 979.8,383.4" fill="#ece63a" />
<polygon points="979.8,386.9 984.0,372.9 984.0,387.4" fill="#3a1c0c" />
<ellipse cx="981.8" cy="384.4" rx="2.6" ry="3.0" fill="#2e160a" />
<rect x="983.6" y="332.4" width="3.0" height="55.0" fill="#4c2410" />
<rect x="986.5" y="333.4" width="1.7" height="54.0" fill="#a8961e" />
<polygon points="983.6,333.4 984.0,330.4 987.3,327.1 988.0,329.2 986.4,331.9 988.4,333.9" fill="#2c1c12" />
<ellipse cx="987.0" cy="369.9" rx="2.1" ry="3.2" fill="#34190a" />
<polygon points="991.2,392.6 1000.2,390.1 1012.2,392.6 1012.2,397.6 1001.2,401.1 991.2,398.1" fill="#cdc21f" />
<polygon points="991.2,392.6 999.2,390.4 1005.2,391.9 997.2,394.6" fill="#e8e030" />
<polygon points="991.2,392.6 997.2,394.6 997.2,397.1 991.2,395.6" fill="#dcd226" />
<polygon points="1005.2,391.1 1012.2,392.6 1012.2,397.6 1005.2,399.6" fill="#a4962a" />
<polygon points="991.2,396.6 1001.2,399.6 1012.2,396.1 1012.2,397.6 1001.2,401.1 991.2,398.1" fill="#cfa21c" />
<polygon points="998.7,387.6 1003.7,386.1 1007.2,387.1 1007.2,392.6 1002.2,394.1 998.7,393.1" fill="#d2c822" />
<polygon points="998.7,387.6 1003.7,386.1 1007.2,387.1 1002.2,388.6" fill="#ece63a" />
<polygon points="1002.2,392.1 1006.4,378.1 1006.4,392.6" fill="#3a1c0c" />
<ellipse cx="1004.2" cy="389.6" rx="2.6" ry="3.0" fill="#2e160a" />
<rect x="1006.0" y="337.6" width="3.0" height="55.0" fill="#4c2410" />
<rect x="1008.9" y="338.6" width="1.7" height="54.0" fill="#a8961e" />
<polygon points="1006.0,338.6 1006.4,335.6 1009.7,332.3 1010.4,334.4 1008.8,337.1 1010.8,339.1" fill="#2c1c12" />
<ellipse cx="1009.4" cy="375.1" rx="2.1" ry="3.2" fill="#34190a" />
<polygon points="1013.6,397.7 1022.6,395.2 1034.6,397.7 1034.6,402.7 1023.6,406.2 1013.6,403.2" fill="#cdc21f" />
<polygon points="1013.6,397.7 1021.6,395.5 1027.6,397.0 1019.6,399.7" fill="#e8e030" />
<polygon points="1013.6,397.7 1019.6,399.7 1019.6,402.2 1013.6,400.7" fill="#dcd226" />
<polygon points="1027.6,396.2 1034.6,397.7 1034.6,402.7 1027.6,404.7" fill="#a4962a" />
<polygon points="1013.6,401.7 1023.6,404.7 1034.6,401.2 1034.6,402.7 1023.6,406.2 1013.6,403.2" fill="#cfa21c" />
<polygon points="1021.1,392.7 1026.1,391.2 1029.6,392.2 1029.6,397.7 1024.6,399.2 1021.1,398.2" fill="#d2c822" />
<polygon points="1021.1,392.7 1026.1,391.2 1029.6,392.2 1024.6,393.7" fill="#ece63a" />
<polygon points="1024.6,397.2 1028.8,383.2 1028.8,397.7" fill="#3a1c0c" />
<ellipse cx="1026.6" cy="394.7" rx="2.6" ry="3.0" fill="#2e160a" />
<rect x="1028.4" y="342.7" width="3.0" height="55.0" fill="#4c2410" />
<rect x="1031.3" y="343.7" width="1.7" height="54.0" fill="#a8961e" />
<polygon points="1028.4,343.7 1028.8,340.7 1032.1,337.4 1032.8,339.5 1031.2,342.2 1033.2,344.2" fill="#2c1c12" />
<ellipse cx="1031.8" cy="380.2" rx="2.1" ry="3.2" fill="#34190a" />
<polygon points="1036.0,402.9 1045.0,400.4 1057.0,402.9 1057.0,407.9 1046.0,411.4 1036.0,408.4" fill="#cdc21f" />
<polygon points="1036.0,402.9 1044.0,400.7 1050.0,402.2 1042.0,404.9" fill="#e8e030" />
<polygon points="1036.0,402.9 1042.0,404.9 1042.0,407.4 1036.0,405.9" fill="#dcd226" />
<polygon points="1050.0,401.4 1057.0,402.9 1057.0,407.9 1050.0,409.9" fill="#a4962a" />
<polygon points="1036.0,406.9 1046.0,409.9 1057.0,406.4 1057.0,407.9 1046.0,411.4 1036.0,408.4" fill="#cfa21c" />
<polygon points="1043.5,397.9 1048.5,396.4 1052.0,397.4 1052.0,402.9 1047.0,404.4 1043.5,403.4" fill="#d2c822" />
<polygon points="1043.5,397.9 1048.5,396.4 1052.0,397.4 1047.0,398.9" fill="#ece63a" />
<polygon points="1047.0,402.4 1051.2,388.4 1051.2,402.9" fill="#3a1c0c" />
<ellipse cx="1049.0" cy="399.9" rx="2.6" ry="3.0" fill="#2e160a" />
<rect x="1050.8" y="347.9" width="3.0" height="55.0" fill="#4c2410" />
<rect x="1053.7" y="348.9" width="1.7" height="54.0" fill="#a8961e" />
<polygon points="1050.8,348.9 1051.2,345.9 1054.5,342.6 1055.2,344.7 1053.5,347.4 1055.5,349.4" fill="#2c1c12" />
<ellipse cx="1054.2" cy="385.4" rx="2.1" ry="3.2" fill="#34190a" />
<polygon points="1058.3,408.1 1067.3,405.6 1079.3,408.1 1079.3,413.1 1068.3,416.6 1058.3,413.6" fill="#cdc21f" />
<polygon points="1058.3,408.1 1066.3,405.9 1072.3,407.4 1064.3,410.1" fill="#e8e030" />
<polygon points="1058.3,408.1 1064.3,410.1 1064.3,412.6 1058.3,411.1" fill="#dcd226" />
<polygon points="1072.3,406.6 1079.3,408.1 1079.3,413.1 1072.3,415.1" fill="#a4962a" />
<polygon points="1058.3,412.1 1068.3,415.1 1079.3,411.6 1079.3,413.1 1068.3,416.6 1058.3,413.6" fill="#cfa21c" />
<polygon points="1065.8,403.1 1070.8,401.6 1074.3,402.6 1074.3,408.1 1069.3,409.6 1065.8,408.6" fill="#d2c822" />
<polygon points="1065.8,403.1 1070.8,401.6 1074.3,402.6 1069.3,404.1" fill="#ece63a" />
<polygon points="1069.3,407.6 1073.5,393.6 1073.5,408.1" fill="#3a1c0c" />
<ellipse cx="1071.3" cy="405.1" rx="2.6" ry="3.0" fill="#2e160a" />
<rect x="1073.1" y="353.1" width="3.0" height="55.0" fill="#4c2410" />
<rect x="1076.0" y="354.1" width="1.7" height="54.0" fill="#a8961e" />
<polygon points="1073.1,354.1 1073.5,351.1 1076.8,347.8 1077.5,349.9 1075.9,352.6 1077.9,354.6" fill="#2c1c12" />
<ellipse cx="1076.5" cy="390.6" rx="2.1" ry="3.2" fill="#34190a" />
<polygon points="672.6,334.5 681.6,332.0 693.6,334.5 693.6,339.5 682.6,343.0 672.6,340.0" fill="#cdc21f" />
<polygon points="672.6,334.5 680.6,332.3 686.6,333.8 678.6,336.5" fill="#e8e030" />
<polygon points="672.6,334.5 678.6,336.5 678.6,339.0 672.6,337.5" fill="#dcd226" />
<polygon points="686.6,333.0 693.6,334.5 693.6,339.5 686.6,341.5" fill="#a4962a" />
<polygon points="672.6,338.5 682.6,341.5 693.6,338.0 693.6,339.5 682.6,343.0 672.6,340.0" fill="#cfa21c" />
<polygon points="680.1,329.5 685.1,328.0 688.6,329.0 688.6,334.5 683.6,336.0 680.1,335.0" fill="#d2c822" />
<polygon points="680.1,329.5 685.1,328.0 688.6,329.0 683.6,330.5" fill="#ece63a" />
<polygon points="683.6,334.0 687.8,320.0 687.8,334.5" fill="#3a1c0c" />
<ellipse cx="685.6" cy="331.5" rx="2.6" ry="3.0" fill="#2e160a" />
<rect x="687.4" y="279.5" width="3.0" height="55.0" fill="#4c2410" />
<rect x="690.3" y="280.5" width="1.7" height="54.0" fill="#a8961e" />
<polygon points="687.4,280.5 687.8,277.5 691.1,274.2 691.8,276.3 690.2,279.0 692.2,281.0" fill="#2c1c12" />
<ellipse cx="690.8" cy="317.0" rx="2.1" ry="3.2" fill="#34190a" />
<polygon points="695.3,339.8 704.3,337.3 716.3,339.8 716.3,344.8 705.3,348.3 695.3,345.3" fill="#cdc21f" />
<polygon points="695.3,339.8 703.3,337.6 709.3,339.1 701.3,341.8" fill="#e8e030" />
<polygon points="695.3,339.8 701.3,341.8 701.3,344.3 695.3,342.8" fill="#dcd226" />
<polygon points="709.3,338.3 716.3,339.8 716.3,344.8 709.3,346.8" fill="#a4962a" />
<polygon points="695.3,343.8 705.3,346.8 716.3,343.3 716.3,344.8 705.3,348.3 695.3,345.3" fill="#cfa21c" />
<polygon points="702.8,334.8 707.8,333.3 711.3,334.3 711.3,339.8 706.3,341.3 702.8,340.3" fill="#d2c822" />
<polygon points="702.8,334.8 707.8,333.3 711.3,334.3 706.3,335.8" fill="#ece63a" />
<polygon points="706.3,339.3 710.5,325.3 710.5,339.8" fill="#3a1c0c" />
<ellipse cx="708.3" cy="336.8" rx="2.6" ry="3.0" fill="#2e160a" />
<rect x="710.1" y="284.8" width="3.0" height="55.0" fill="#4c2410" />
<rect x="713.0" y="285.8" width="1.7" height="54.0" fill="#a8961e" />
<polygon points="710.1,285.8 710.5,282.8 713.8,279.5 714.5,281.6 712.9,284.3 714.9,286.3" fill="#2c1c12" />
<ellipse cx="713.5" cy="322.3" rx="2.1" ry="3.2" fill="#34190a" />
<polygon points="718.0,345.1 727.0,342.6 739.0,345.1 739.0,350.1 728.0,353.6 718.0,350.6" fill="#cdc21f" />
<polygon points="718.0,345.1 726.0,342.9 732.0,344.4 724.0,347.1" fill="#e8e030" />
<polygon points="718.0,345.1 724.0,347.1 724.0,349.6 718.0,348.1" fill="#dcd226" />
<polygon points="732.0,343.6 739.0,345.1 739.0,350.1 732.0,352.1" fill="#a4962a" />
<polygon points="718.0,349.1 728.0,352.1 739.0,348.6 739.0,350.1 728.0,353.6 718.0,350.6" fill="#cfa21c" />
<polygon points="725.5,340.1 730.5,338.6 734.0,339.6 734.0,345.1 729.0,346.6 725.5,345.6" fill="#d2c822" />
<polygon points="725.5,340.1 730.5,338.6 734.0,339.6 729.0,341.1" fill="#ece63a" />
<polygon points="729.0,344.6 733.2,330.6 733.2,345.1" fill="#3a1c0c" />
<ellipse cx="731.0" cy="342.1" rx="2.6" ry="3.0" fill="#2e160a" />
<rect x="732.8" y="290.1" width="3.0" height="55.0" fill="#4c2410" />
<rect x="735.7" y="291.1" width="1.7" height="54.0" fill="#a8961e" />
<polygon points="732.8,291.1 733.2,288.1 736.5,284.8 737.2,286.9 735.6,289.6 737.6,291.6" fill="#2c1c12" />
<ellipse cx="736.2" cy="327.6" rx="2.1" ry="3.2" fill="#34190a" />
<polygon points="740.7,350.4 749.7,347.9 761.7,350.4 761.7,355.4 750.7,358.9 740.7,355.9" fill="#cdc21f" />
<polygon points="740.7,350.4 748.7,348.2 754.7,349.7 746.7,352.4" fill="#e8e030" />
<polygon points="740.7,350.4 746.7,352.4 746.7,354.9 740.7,353.4" fill="#dcd226" />
<polygon points="754.7,348.9 761.7,350.4 761.7,355.4 754.7,357.4" fill="#a4962a" />
<polygon points="740.7,354.4 750.7,357.4 761.7,353.9 761.7,355.4 750.7,358.9 740.7,355.9" fill="#cfa21c" />
<polygon points="748.2,345.4 753.2,343.9 756.7,344.9 756.7,350.4 751.7,351.9 748.2,350.9" fill="#d2c822" />
<polygon points="748.2,345.4 753.2,343.9 756.7,344.9 751.7,346.4" fill="#ece63a" />
<polygon points="751.7,349.9 755.9,335.9 755.9,350.4" fill="#3a1c0c" />
<ellipse cx="753.7" cy="347.4" rx="2.6" ry="3.0" fill="#2e160a" />
<rect x="755.5" y="295.4" width="3.0" height="55.0" fill="#4c2410" />
<rect x="758.4" y="296.4" width="1.7" height="54.0" fill="#a8961e" />
<polygon points="755.5,296.4 755.9,293.4 759.2,290.1 759.9,292.2 758.3,294.9 760.3,296.9" fill="#2c1c12" />
<ellipse cx="758.9" cy="332.9" rx="2.1" ry="3.2" fill="#34190a" />
<polygon points="630.2,351.3 641.2,348.8 645.2,350.8 645.2,353.3 634.2,356.3 630.2,354.3" fill="#323436" />
<polygon points="642.2,354.8 653.2,351.8 657.2,353.8 657.2,356.3 646.2,359.3 642.2,357.3" fill="#323436" />
<polygon points="630.2,351.3 641.2,348.8 645.2,350.8 634.2,353.6" fill="#55595c" />
<polygon points="642.2,354.8 653.2,351.8 657.2,353.8 646.2,357.0" fill="#55595c" />
<polygon points="641.2,342.3 654.2,339.3 661.2,342.0 648.2,345.3" fill="#cdcdcd" />
<polygon points="641.2,342.3 648.2,345.3 648.2,352.3 641.2,349.3" fill="#b6b6b6" />
<polygon points="648.2,345.3 661.2,342.0 661.2,348.8 648.2,352.3" fill="#9a9a9a" />
<polygon points="634.2,341.8 640.7,339.8 641.7,348.8 635.7,350.8" fill="#a9cdee" />
<polygon points="637.7,343.8 641.7,342.8 642.2,349.8 638.7,350.8" fill="#e9f1f8" />
<line x1="639.2" y1="343.6" x2="616.0" y2="274.6" stroke="#757d83" stroke-width="5.00" />
<line x1="640.9" y1="344.1" x2="617.7" y2="275.1" stroke="#555d63" stroke-width="1.60" />
<line x1="638.2" y1="339.6" x2="638.2" y2="345.6" stroke="#8a9298" stroke-width="3.00" />
<line x1="614.7" y1="285.6" x2="614.9" y2="291.1" stroke="#4a4f54" stroke-width="1.70" />
<polygon points="675.2,361.6 686.2,359.1 690.2,361.1 690.2,363.6 679.2,366.6 675.2,364.6" fill="#323436" />
<polygon points="687.2,365.1 698.2,362.1 702.2,364.1 702.2,366.6 691.2,369.6 687.2,367.6" fill="#323436" />
<polygon points="675.2,361.6 686.2,359.1 690.2,361.1 679.2,363.9" fill="#55595c" />
<polygon points="687.2,365.1 698.2,362.1 702.2,364.1 691.2,367.3" fill="#55595c" />
<polygon points="686.2,352.6 699.2,349.6 706.2,352.3 693.2,355.6" fill="#cdcdcd" />
<polygon points="686.2,352.6 693.2,355.6 693.2,362.6 686.2,359.6" fill="#b6b6b6" />
<polygon points="693.2,355.6 706.2,352.3 706.2,359.1 693.2,362.6" fill="#9a9a9a" />
<polygon points="679.2,352.1 685.7,350.1 686.7,359.1 680.7,361.1" fill="#a9cdee" />
<polygon points="682.7,354.1 686.7,353.1 687.2,360.1 683.7,361.1" fill="#e9f1f8" />
<line x1="684.2" y1="353.9" x2="661.0" y2="284.9" stroke="#757d83" stroke-width="5.00" />
<line x1="685.9" y1="354.4" x2="662.7" y2="285.4" stroke="#555d63" stroke-width="1.60" />
<line x1="683.2" y1="349.9" x2="683.2" y2="355.9" stroke="#8a9298" stroke-width="3.00" />
<line x1="659.7" y1="295.9" x2="659.9" y2="301.4" stroke="#4a4f54" stroke-width="1.70" />
<polygon points="720.2,371.9 731.2,369.4 735.2,371.4 735.2,373.9 724.2,376.9 720.2,374.9" fill="#323436" />
<polygon points="732.2,375.4 743.2,372.4 747.2,374.4 747.2,376.9 736.2,379.9 732.2,377.9" fill="#323436" />
<polygon points="720.2,371.9 731.2,369.4 735.2,371.4 724.2,374.2" fill="#55595c" />
<polygon points="732.2,375.4 743.2,372.4 747.2,374.4 736.2,377.6" fill="#55595c" />
<polygon points="731.2,362.9 744.2,359.9 751.2,362.6 738.2,365.9" fill="#cdcdcd" />
<polygon points="731.2,362.9 738.2,365.9 738.2,372.9 731.2,369.9" fill="#b6b6b6" />
<polygon points="738.2,365.9 751.2,362.6 751.2,369.4 738.2,372.9" fill="#9a9a9a" />
<polygon points="724.2,362.4 730.7,360.4 731.7,369.4 725.7,371.4" fill="#a9cdee" />
<polygon points="727.7,364.4 731.7,363.4 732.2,370.4 728.7,371.4" fill="#e9f1f8" />
<line x1="729.2" y1="364.2" x2="706.0" y2="295.2" stroke="#757d83" stroke-width="5.00" />
<line x1="730.9" y1="364.7" x2="707.7" y2="295.7" stroke="#555d63" stroke-width="1.60" />
<line x1="728.2" y1="360.2" x2="728.2" y2="366.2" stroke="#8a9298" stroke-width="3.00" />
<line x1="704.7" y1="306.2" x2="704.9" y2="311.7" stroke="#4a4f54" stroke-width="1.70" />
<polygon points="765.2,382.1 776.2,379.6 780.2,381.6 780.2,384.1 769.2,387.1 765.2,385.1" fill="#323436" />
<polygon points="777.2,385.6 788.2,382.6 792.2,384.6 792.2,387.1 781.2,390.1 777.2,388.1" fill="#323436" />
<polygon points="765.2,382.1 776.2,379.6 780.2,381.6 769.2,384.4" fill="#55595c" />
<polygon points="777.2,385.6 788.2,382.6 792.2,384.6 781.2,387.8" fill="#55595c" />
<polygon points="776.2,373.1 789.2,370.1 796.2,372.8 783.2,376.1" fill="#cdcdcd" />
<polygon points="776.2,373.1 783.2,376.1 783.2,383.1 776.2,380.1" fill="#b6b6b6" />
<polygon points="783.2,376.1 796.2,372.8 796.2,379.6 783.2,383.1" fill="#9a9a9a" />
<polygon points="769.2,372.6 775.7,370.6 776.7,379.6 770.7,381.6" fill="#a9cdee" />
<polygon points="772.7,374.6 776.7,373.6 777.2,380.6 773.7,381.6" fill="#e9f1f8" />
<line x1="774.2" y1="374.4" x2="751.0" y2="305.4" stroke="#757d83" stroke-width="5.00" />
<line x1="775.9" y1="374.9" x2="752.7" y2="305.9" stroke="#555d63" stroke-width="1.60" />
<line x1="773.2" y1="370.4" x2="773.2" y2="376.4" stroke="#8a9298" stroke-width="3.00" />
<line x1="749.7" y1="316.4" x2="749.9" y2="321.9" stroke="#4a4f54" stroke-width="1.70" />
<polygon points="810.2,392.4 821.2,389.9 825.2,391.9 825.2,394.4 814.2,397.4 810.2,395.4" fill="#323436" />
<polygon points="822.2,395.9 833.2,392.9 837.2,394.9 837.2,397.4 826.2,400.4 822.2,398.4" fill="#323436" />
<polygon points="810.2,392.4 821.2,389.9 825.2,391.9 814.2,394.7" fill="#55595c" />
<polygon points="822.2,395.9 833.2,392.9 837.2,394.9 826.2,398.1" fill="#55595c" />
<polygon points="821.2,383.4 834.2,380.4 841.2,383.1 828.2,386.4" fill="#cdcdcd" />
<polygon points="821.2,383.4 828.2,386.4 828.2,393.4 821.2,390.4" fill="#b6b6b6" />
<polygon points="828.2,386.4 841.2,383.1 841.2,389.9 828.2,393.4" fill="#9a9a9a" />
<polygon points="814.2,382.9 820.7,380.9 821.7,389.9 815.7,391.9" fill="#a9cdee" />
<polygon points="817.7,384.9 821.7,383.9 822.2,390.9 818.7,391.9" fill="#e9f1f8" />
<line x1="819.2" y1="384.7" x2="796.0" y2="315.7" stroke="#757d83" stroke-width="5.00" />
<line x1="820.9" y1="385.2" x2="797.7" y2="316.2" stroke="#555d63" stroke-width="1.60" />
<line x1="818.2" y1="380.7" x2="818.2" y2="386.7" stroke="#8a9298" stroke-width="3.00" />
<line x1="794.7" y1="326.7" x2="794.9" y2="332.2" stroke="#4a4f54" stroke-width="1.70" />
<polygon points="855.2,402.7 866.2,400.2 870.2,402.2 870.2,404.7 859.2,407.7 855.2,405.7" fill="#323436" />
<polygon points="867.2,406.2 878.2,403.2 882.2,405.2 882.2,407.7 871.2,410.7 867.2,408.7" fill="#323436" />
<polygon points="855.2,402.7 866.2,400.2 870.2,402.2 859.2,405.0" fill="#55595c" />
<polygon points="867.2,406.2 878.2,403.2 882.2,405.2 871.2,408.4" fill="#55595c" />
<polygon points="866.2,393.7 879.2,390.7 886.2,393.4 873.2,396.7" fill="#cdcdcd" />
<polygon points="866.2,393.7 873.2,396.7 873.2,403.7 866.2,400.7" fill="#b6b6b6" />
<polygon points="873.2,396.7 886.2,393.4 886.2,400.2 873.2,403.7" fill="#9a9a9a" />
<polygon points="859.2,393.2 865.7,391.2 866.7,400.2 860.7,402.2" fill="#a9cdee" />
<polygon points="862.7,395.2 866.7,394.2 867.2,401.2 863.7,402.2" fill="#e9f1f8" />
<line x1="864.2" y1="395.0" x2="841.0" y2="326.0" stroke="#757d83" stroke-width="5.00" />
<line x1="865.9" y1="395.5" x2="842.7" y2="326.5" stroke="#555d63" stroke-width="1.60" />
<line x1="863.2" y1="391.0" x2="863.2" y2="397.0" stroke="#8a9298" stroke-width="3.00" />
<line x1="839.7" y1="337.0" x2="839.9" y2="342.5" stroke="#4a4f54" stroke-width="1.70" />
<polygon points="900.2,413.0 911.2,410.5 915.2,412.5 915.2,415.0 904.2,418.0 900.2,416.0" fill="#323436" />
<polygon points="912.2,416.5 923.2,413.5 927.2,415.5 927.2,418.0 916.2,421.0 912.2,419.0" fill="#323436" />
<polygon points="900.2,413.0 911.2,410.5 915.2,412.5 904.2,415.3" fill="#55595c" />
<polygon points="912.2,416.5 923.2,413.5 927.2,415.5 916.2,418.7" fill="#55595c" />
<polygon points="911.2,404.0 924.2,401.0 931.2,403.7 918.2,407.0" fill="#cdcdcd" />
<polygon points="911.2,404.0 918.2,407.0 918.2,414.0 911.2,411.0" fill="#b6b6b6" />
<polygon points="918.2,407.0 931.2,403.7 931.2,410.5 918.2,414.0" fill="#9a9a9a" />
<polygon points="904.2,403.5 910.7,401.5 911.7,410.5 905.7,412.5" fill="#a9cdee" />
<polygon points="907.7,405.5 911.7,404.5 912.2,411.5 908.7,412.5" fill="#e9f1f8" />
<line x1="909.2" y1="405.3" x2="886.0" y2="336.3" stroke="#757d83" stroke-width="5.00" />
<line x1="910.9" y1="405.8" x2="887.7" y2="336.8" stroke="#555d63" stroke-width="1.60" />
<line x1="908.2" y1="401.3" x2="908.2" y2="407.3" stroke="#8a9298" stroke-width="3.00" />
<line x1="884.7" y1="347.3" x2="884.9" y2="352.8" stroke="#4a4f54" stroke-width="1.70" />
<polygon points="945.2,423.3 956.2,420.8 960.2,422.8 960.2,425.3 949.2,428.3 945.2,426.3" fill="#323436" />
<polygon points="957.2,426.8 968.2,423.8 972.2,425.8 972.2,428.3 961.2,431.3 957.2,429.3" fill="#323436" />
<polygon points="945.2,423.3 956.2,420.8 960.2,422.8 949.2,425.6" fill="#55595c" />
<polygon points="957.2,426.8 968.2,423.8 972.2,425.8 961.2,429.0" fill="#55595c" />
<polygon points="956.2,414.3 969.2,411.3 976.2,414.0 963.2,417.3" fill="#cdcdcd" />
<polygon points="956.2,414.3 963.2,417.3 963.2,424.3 956.2,421.3" fill="#b6b6b6" />
<polygon points="963.2,417.3 976.2,414.0 976.2,420.8 963.2,424.3" fill="#9a9a9a" />
<polygon points="949.2,413.8 955.7,411.8 956.7,420.8 950.7,422.8" fill="#a9cdee" />
<polygon points="952.7,415.8 956.7,414.8 957.2,421.8 953.7,422.8" fill="#e9f1f8" />
<line x1="954.2" y1="415.6" x2="931.0" y2="346.6" stroke="#757d83" stroke-width="5.00" />
<line x1="955.9" y1="416.1" x2="932.7" y2="347.1" stroke="#555d63" stroke-width="1.60" />
<line x1="953.2" y1="411.6" x2="953.2" y2="417.6" stroke="#8a9298" stroke-width="3.00" />
<line x1="929.7" y1="357.6" x2="929.9" y2="363.1" stroke="#4a4f54" stroke-width="1.70" />
<polygon points="571.0,372.5 597.0,365.5 597.0,373.0 574.0,379.0" fill="#26282a" />
<ellipse cx="575.5" cy="376.8" rx="2.4" ry="2.6" fill="#101010" />
<ellipse cx="580.0" cy="375.7" rx="2.4" ry="2.6" fill="#101010" />
<ellipse cx="584.5" cy="374.6" rx="2.4" ry="2.6" fill="#101010" />
<ellipse cx="589.0" cy="373.5" rx="2.4" ry="2.6" fill="#101010" />
<ellipse cx="593.5" cy="372.4" rx="2.4" ry="2.6" fill="#101010" />
<polygon points="572.0,367.0 584.0,363.5 597.0,363.0 597.0,367.0 574.0,373.0" fill="#c87618" />
<polygon points="560.0,366.2 568.0,364.2 573.5,365.8 573.5,374.5 565.5,377.0 560.0,375.0" fill="#d37e1c" />
<polygon points="560.0,366.2 568.0,364.2 573.5,365.8 565.5,367.8" fill="#f0a030" />
<polygon points="560.8,368.6 565.2,369.8 569.0,368.8 569.0,373.2 565.2,374.4 560.8,373.4" fill="#f4f4f2" />
<polygon points="565.5,375.0 573.5,372.5 573.5,374.5 565.5,377.0" fill="#8a4a10" />
<polygon points="575.5,361.0 583.0,358.5 587.5,360.0 587.5,366.5 579.5,369.0 575.5,367.5" fill="#d6801c" />
<polygon points="578.8,360.4 585.5,359.0 585.5,363.2 578.8,364.8" fill="#e8ecee" />
<polygon points="586.0,356.0 593.0,351.0 597.5,353.5 597.5,364.0 590.0,367.0 586.0,364.0" fill="#c87416" />
<polygon points="593.0,351.0 597.5,353.5 597.5,364.0 594.0,362.0" fill="#a85c10" />
<line x1="591.0" y1="354.5" x2="567.0" y2="332.8" stroke="#aa601a" stroke-width="6.20" />
<line x1="592.9" y1="356.2" x2="568.9" y2="334.4" stroke="#7a400e" stroke-width="2.00" />
<line x1="589.4" y1="353.0" x2="565.4" y2="331.2" stroke="#c87a26" stroke-width="1.20" />
<line x1="567.0" y1="332.8" x2="549.6" y2="317.0" stroke="#161616" stroke-width="5.40" />
<polygon points="543.6,310.5 548.1,308.5 552.6,317.5 548.1,320.5" fill="#7d848a" />
<polygon points="545.1,312.5 546.8,311.7 549.1,316.5 547.4,317.5" fill="#c8ccd0" />
<line x1="545.0" y1="318.0" x2="545.0" y2="323.0" stroke="#5a6066" stroke-width="1.80" />
<line x1="545.0" y1="323.0" x2="545.0" y2="329.0" stroke="#9aa0a6" stroke-width="0.80" />
<polygon points="616.0,382.9 642.0,375.9 642.0,383.4 619.0,389.4" fill="#26282a" />
<ellipse cx="620.5" cy="387.2" rx="2.4" ry="2.6" fill="#101010" />
<ellipse cx="625.0" cy="386.1" rx="2.4" ry="2.6" fill="#101010" />
<ellipse cx="629.5" cy="385.0" rx="2.4" ry="2.6" fill="#101010" />
<ellipse cx="634.0" cy="383.9" rx="2.4" ry="2.6" fill="#101010" />
<ellipse cx="638.5" cy="382.8" rx="2.4" ry="2.6" fill="#101010" />
<polygon points="617.0,377.4 629.0,373.9 642.0,373.4 642.0,377.4 619.0,383.4" fill="#c87618" />
<polygon points="605.0,376.6 613.0,374.6 618.5,376.2 618.5,384.9 610.5,387.4 605.0,385.4" fill="#d37e1c" />
<polygon points="605.0,376.6 613.0,374.6 618.5,376.2 610.5,378.2" fill="#f0a030" />
<polygon points="605.8,379.0 610.2,380.2 614.0,379.2 614.0,383.6 610.2,384.8 605.8,383.8" fill="#f4f4f2" />
<polygon points="610.5,385.4 618.5,382.9 618.5,384.9 610.5,387.4" fill="#8a4a10" />
<polygon points="620.5,371.4 628.0,368.9 632.5,370.4 632.5,376.9 624.5,379.4 620.5,377.9" fill="#d6801c" />
<polygon points="623.8,370.8 630.5,369.4 630.5,373.6 623.8,375.2" fill="#e8ecee" />
<polygon points="631.0,366.4 638.0,361.4 642.5,363.9 642.5,374.4 635.0,377.4 631.0,374.4" fill="#c87416" />
<polygon points="638.0,361.4 642.5,363.9 642.5,374.4 639.0,372.4" fill="#a85c10" />
<line x1="636.0" y1="364.9" x2="612.0" y2="343.1" stroke="#aa601a" stroke-width="6.20" />
<line x1="637.9" y1="366.6" x2="613.9" y2="344.8" stroke="#7a400e" stroke-width="2.00" />
<line x1="634.4" y1="363.4" x2="610.4" y2="341.6" stroke="#c87a26" stroke-width="1.20" />
<line x1="612.0" y1="343.1" x2="594.6" y2="327.4" stroke="#161616" stroke-width="5.40" />
<polygon points="588.6,320.9 593.1,318.9 597.6,327.9 593.1,330.9" fill="#7d848a" />
<polygon points="590.1,322.9 591.8,322.1 594.1,326.9 592.4,327.9" fill="#c8ccd0" />
<line x1="590.0" y1="328.4" x2="590.0" y2="333.4" stroke="#5a6066" stroke-width="1.80" />
<line x1="590.0" y1="333.4" x2="590.0" y2="339.4" stroke="#9aa0a6" stroke-width="0.80" />
<polygon points="661.0,393.3 687.0,386.3 687.0,393.8 664.0,399.8" fill="#26282a" />
<ellipse cx="665.5" cy="397.6" rx="2.4" ry="2.6" fill="#101010" />
<ellipse cx="670.0" cy="396.5" rx="2.4" ry="2.6" fill="#101010" />
<ellipse cx="674.5" cy="395.4" rx="2.4" ry="2.6" fill="#101010" />
<ellipse cx="679.0" cy="394.3" rx="2.4" ry="2.6" fill="#101010" />
<ellipse cx="683.5" cy="393.2" rx="2.4" ry="2.6" fill="#101010" />
<polygon points="662.0,387.8 674.0,384.3 687.0,383.8 687.0,387.8 664.0,393.8" fill="#c87618" />
<polygon points="650.0,387.0 658.0,385.0 663.5,386.6 663.5,395.3 655.5,397.8 650.0,395.8" fill="#d37e1c" />
<polygon points="650.0,387.0 658.0,385.0 663.5,386.6 655.5,388.6" fill="#f0a030" />
<polygon points="650.8,389.4 655.2,390.6 659.0,389.6 659.0,394.0 655.2,395.2 650.8,394.2" fill="#f4f4f2" />
<polygon points="655.5,395.8 663.5,393.3 663.5,395.3 655.5,397.8" fill="#8a4a10" />
<polygon points="665.5,381.8 673.0,379.3 677.5,380.8 677.5,387.3 669.5,389.8 665.5,388.3" fill="#d6801c" />
<polygon points="668.8,381.2 675.5,379.8 675.5,384.0 668.8,385.6" fill="#e8ecee" />
<polygon points="676.0,376.8 683.0,371.8 687.5,374.3 687.5,384.8 680.0,387.8 676.0,384.8" fill="#c87416" />
<polygon points="683.0,371.8 687.5,374.3 687.5,384.8 684.0,382.8" fill="#a85c10" />
<line x1="681.0" y1="375.3" x2="657.0" y2="353.6" stroke="#aa601a" stroke-width="6.20" />
<line x1="682.9" y1="377.0" x2="658.9" y2="355.2" stroke="#7a400e" stroke-width="2.00" />
<line x1="679.4" y1="373.8" x2="655.4" y2="352.1" stroke="#c87a26" stroke-width="1.20" />
<line x1="657.0" y1="353.6" x2="639.6" y2="337.8" stroke="#161616" stroke-width="5.40" />
<polygon points="633.6,331.3 638.1,329.3 642.6,338.3 638.1,341.3" fill="#7d848a" />
<polygon points="635.1,333.3 636.8,332.5 639.1,337.3 637.4,338.3" fill="#c8ccd0" />
<line x1="635.0" y1="338.8" x2="635.0" y2="343.8" stroke="#5a6066" stroke-width="1.80" />
<line x1="635.0" y1="343.8" x2="635.0" y2="349.8" stroke="#9aa0a6" stroke-width="0.80" />
<polygon points="706.0,403.7 732.0,396.7 732.0,404.2 709.0,410.2" fill="#26282a" />
<ellipse cx="710.5" cy="408.0" rx="2.4" ry="2.6" fill="#101010" />
<ellipse cx="715.0" cy="406.9" rx="2.4" ry="2.6" fill="#101010" />
<ellipse cx="719.5" cy="405.8" rx="2.4" ry="2.6" fill="#101010" />
<ellipse cx="724.0" cy="404.7" rx="2.4" ry="2.6" fill="#101010" />
<ellipse cx="728.5" cy="403.6" rx="2.4" ry="2.6" fill="#101010" />
<polygon points="707.0,398.2 719.0,394.7 732.0,394.2 732.0,398.2 709.0,404.2" fill="#c87618" />
<polygon points="695.0,397.4 703.0,395.4 708.5,397.0 708.5,405.7 700.5,408.2 695.0,406.2" fill="#d37e1c" />
<polygon points="695.0,397.4 703.0,395.4 708.5,397.0 700.5,399.0" fill="#f0a030" />
<polygon points="695.8,399.8 700.2,401.0 704.0,400.0 704.0,404.4 700.2,405.6 695.8,404.6" fill="#f4f4f2" />
<polygon points="700.5,406.2 708.5,403.7 708.5,405.7 700.5,408.2" fill="#8a4a10" />
<polygon points="710.5,392.2 718.0,389.7 722.5,391.2 722.5,397.7 714.5,400.2 710.5,398.7" fill="#d6801c" />
<polygon points="713.8,391.6 720.5,390.2 720.5,394.4 713.8,396.0" fill="#e8ecee" />
<polygon points="721.0,387.2 728.0,382.2 732.5,384.7 732.5,395.2 725.0,398.2 721.0,395.2" fill="#c87416" />
<polygon points="728.0,382.2 732.5,384.7 732.5,395.2 729.0,393.2" fill="#a85c10" />
<line x1="726.0" y1="385.7" x2="702.0" y2="363.9" stroke="#aa601a" stroke-width="6.20" />
<line x1="727.9" y1="387.4" x2="703.9" y2="365.6" stroke="#7a400e" stroke-width="2.00" />
<line x1="724.4" y1="384.2" x2="700.4" y2="362.4" stroke="#c87a26" stroke-width="1.20" />
<line x1="702.0" y1="363.9" x2="684.6" y2="348.2" stroke="#161616" stroke-width="5.40" />
<polygon points="678.6,341.7 683.1,339.7 687.6,348.7 683.1,351.7" fill="#7d848a" />
<polygon points="680.1,343.7 681.8,342.9 684.1,347.7 682.4,348.7" fill="#c8ccd0" />
<line x1="680.0" y1="349.2" x2="680.0" y2="354.2" stroke="#5a6066" stroke-width="1.80" />
<line x1="680.0" y1="354.2" x2="680.0" y2="360.2" stroke="#9aa0a6" stroke-width="0.80" />
<polygon points="751.0,414.1 777.0,407.1 777.0,414.6 754.0,420.6" fill="#26282a" />
<ellipse cx="755.5" cy="418.4" rx="2.4" ry="2.6" fill="#101010" />
<ellipse cx="760.0" cy="417.3" rx="2.4" ry="2.6" fill="#101010" />
<ellipse cx="764.5" cy="416.2" rx="2.4" ry="2.6" fill="#101010" />
<ellipse cx="769.0" cy="415.1" rx="2.4" ry="2.6" fill="#101010" />
<ellipse cx="773.5" cy="414.0" rx="2.4" ry="2.6" fill="#101010" />
<polygon points="752.0,408.6 764.0,405.1 777.0,404.6 777.0,408.6 754.0,414.6" fill="#c87618" />
<polygon points="740.0,407.8 748.0,405.8 753.5,407.4 753.5,416.1 745.5,418.6 740.0,416.6" fill="#d37e1c" />
<polygon points="740.0,407.8 748.0,405.8 753.5,407.4 745.5,409.4" fill="#f0a030" />
<polygon points="740.8,410.2 745.2,411.4 749.0,410.4 749.0,414.8 745.2,416.0 740.8,415.0" fill="#f4f4f2" />
<polygon points="745.5,416.6 753.5,414.1 753.5,416.1 745.5,418.6" fill="#8a4a10" />
<polygon points="755.5,402.6 763.0,400.1 767.5,401.6 767.5,408.1 759.5,410.6 755.5,409.1" fill="#d6801c" />
<polygon points="758.8,402.0 765.5,400.6 765.5,404.8 758.8,406.4" fill="#e8ecee" />
<polygon points="766.0,397.6 773.0,392.6 777.5,395.1 777.5,405.6 770.0,408.6 766.0,405.6" fill="#c87416" />
<polygon points="773.0,392.6 777.5,395.1 777.5,405.6 774.0,403.6" fill="#a85c10" />
<line x1="771.0" y1="396.1" x2="747.0" y2="374.4" stroke="#aa601a" stroke-width="6.20" />
<line x1="772.9" y1="397.8" x2="748.9" y2="376.1" stroke="#7a400e" stroke-width="2.00" />
<line x1="769.4" y1="394.6" x2="745.4" y2="372.9" stroke="#c87a26" stroke-width="1.20" />
<line x1="747.0" y1="374.4" x2="729.6" y2="358.6" stroke="#161616" stroke-width="5.40" />
<polygon points="723.6,352.1 728.1,350.1 732.6,359.1 728.1,362.1" fill="#7d848a" />
<polygon points="725.1,354.1 726.8,353.3 729.1,358.1 727.4,359.1" fill="#c8ccd0" />
<line x1="725.0" y1="359.6" x2="725.0" y2="364.6" stroke="#5a6066" stroke-width="1.80" />
<line x1="725.0" y1="364.6" x2="725.0" y2="370.6" stroke="#9aa0a6" stroke-width="0.80" />
<polygon points="796.0,424.5 822.0,417.5 822.0,425.0 799.0,431.0" fill="#26282a" />
<ellipse cx="800.5" cy="428.8" rx="2.4" ry="2.6" fill="#101010" />
<ellipse cx="805.0" cy="427.7" rx="2.4" ry="2.6" fill="#101010" />
<ellipse cx="809.5" cy="426.6" rx="2.4" ry="2.6" fill="#101010" />
<ellipse cx="814.0" cy="425.5" rx="2.4" ry="2.6" fill="#101010" />
<ellipse cx="818.5" cy="424.4" rx="2.4" ry="2.6" fill="#101010" />
<polygon points="797.0,419.0 809.0,415.5 822.0,415.0 822.0,419.0 799.0,425.0" fill="#c87618" />
<polygon points="785.0,418.2 793.0,416.2 798.5,417.8 798.5,426.5 790.5,429.0 785.0,427.0" fill="#d37e1c" />
<polygon points="785.0,418.2 793.0,416.2 798.5,417.8 790.5,419.8" fill="#f0a030" />
<polygon points="785.8,420.6 790.2,421.8 794.0,420.8 794.0,425.2 790.2,426.4 785.8,425.4" fill="#f4f4f2" />
<polygon points="790.5,427.0 798.5,424.5 798.5,426.5 790.5,429.0" fill="#8a4a10" />
<polygon points="800.5,413.0 808.0,410.5 812.5,412.0 812.5,418.5 804.5,421.0 800.5,419.5" fill="#d6801c" />
<polygon points="803.8,412.4 810.5,411.0 810.5,415.2 803.8,416.8" fill="#e8ecee" />
<polygon points="811.0,408.0 818.0,403.0 822.5,405.5 822.5,416.0 815.0,419.0 811.0,416.0" fill="#c87416" />
<polygon points="818.0,403.0 822.5,405.5 822.5,416.0 819.0,414.0" fill="#a85c10" />
<line x1="816.0" y1="406.5" x2="792.0" y2="384.8" stroke="#aa601a" stroke-width="6.20" />
<line x1="817.9" y1="408.2" x2="793.9" y2="386.4" stroke="#7a400e" stroke-width="2.00" />
<line x1="814.4" y1="405.0" x2="790.4" y2="383.2" stroke="#c87a26" stroke-width="1.20" />
<line x1="792.0" y1="384.8" x2="774.6" y2="369.0" stroke="#161616" stroke-width="5.40" />
<polygon points="768.6,362.5 773.1,360.5 777.6,369.5 773.1,372.5" fill="#7d848a" />
<polygon points="770.1,364.5 771.8,363.7 774.1,368.5 772.4,369.5" fill="#c8ccd0" />
<line x1="770.0" y1="370.0" x2="770.0" y2="375.0" stroke="#5a6066" stroke-width="1.80" />
<line x1="770.0" y1="375.0" x2="770.0" y2="381.0" stroke="#9aa0a6" stroke-width="0.80" />
<ellipse cx="523.0" cy="388.5" rx="3.6" ry="4.0" fill="#101010" />
<polygon points="504.0,386.0 518.0,381.5 527.5,384.5 527.5,391.0 512.0,397.0 504.0,394.0" fill="#d49c16" />
<polygon points="504.0,386.0 518.0,381.5 527.5,384.5 512.0,389.0" fill="#e8b424" />
<polygon points="518.0,380.0 523.0,378.5 526.0,380.0 526.0,385.0 521.0,386.5 518.0,385.0" fill="#c48e12" />
<polygon points="507.5,380.0 514.0,378.0 517.5,379.5 517.5,386.0 511.0,388.0 507.5,386.5" fill="#2c8cc6" />
<polygon points="507.5,380.0 514.0,378.0 517.5,379.5 511.0,381.5" fill="#1d6896" />
<polygon points="511.0,381.5 517.5,379.5 517.5,386.0 511.0,388.0" fill="#1f78ae" />
<line x1="517.0" y1="379.0" x2="518.5" y2="375.5" stroke="#333" stroke-width="0.90" />
<line x1="508.0" y1="389.0" x2="497.0" y2="396.5" stroke="#d09a12" stroke-width="3.40" />
<line x1="504.0" y1="392.0" x2="498.0" y2="397.0" stroke="#8a6a10" stroke-width="1.20" />
<polygon points="490.0,397.0 499.0,393.5 503.0,396.0 501.0,400.5 493.0,402.5 490.0,400.5" fill="#f0c226" />
<polygon points="491.5,398.0 499.0,395.2 501.5,396.6 494.0,399.5" fill="#b88c12" />
<ellipse cx="520.0" cy="391.5" rx="4.5" ry="5.0" fill="#141414" />
<ellipse cx="509.6" cy="396.0" rx="4.5" ry="5.0" fill="#141414" />
<ellipse cx="519.6" cy="391.0" rx="1.6" ry="1.8" fill="#a88414" />
<ellipse cx="509.2" cy="395.5" rx="1.6" ry="1.8" fill="#a88414" />
<ellipse cx="568.0" cy="398.8" rx="3.6" ry="4.0" fill="#101010" />
<polygon points="549.0,396.3 563.0,391.8 572.5,394.8 572.5,401.3 557.0,407.3 549.0,404.3" fill="#d49c16" />
<polygon points="549.0,396.3 563.0,391.8 572.5,394.8 557.0,399.3" fill="#e8b424" />
<polygon points="563.0,390.3 568.0,388.8 571.0,390.3 571.0,395.3 566.0,396.8 563.0,395.3" fill="#c48e12" />
<polygon points="552.5,390.3 559.0,388.3 562.5,389.8 562.5,396.3 556.0,398.3 552.5,396.8" fill="#2c8cc6" />
<polygon points="552.5,390.3 559.0,388.3 562.5,389.8 556.0,391.8" fill="#1d6896" />
<polygon points="556.0,391.8 562.5,389.8 562.5,396.3 556.0,398.3" fill="#1f78ae" />
<line x1="562.0" y1="389.3" x2="563.5" y2="385.8" stroke="#333" stroke-width="0.90" />
<line x1="553.0" y1="399.3" x2="542.0" y2="406.8" stroke="#d09a12" stroke-width="3.40" />
<line x1="549.0" y1="402.3" x2="543.0" y2="407.3" stroke="#8a6a10" stroke-width="1.20" />
<polygon points="535.0,407.3 544.0,403.8 548.0,406.3 546.0,410.8 538.0,412.8 535.0,410.8" fill="#f0c226" />
<polygon points="536.5,408.3 544.0,405.5 546.5,406.9 539.0,409.8" fill="#b88c12" />
<ellipse cx="565.0" cy="401.8" rx="4.5" ry="5.0" fill="#141414" />
<ellipse cx="554.6" cy="406.3" rx="4.5" ry="5.0" fill="#141414" />
<ellipse cx="564.6" cy="401.3" rx="1.6" ry="1.8" fill="#a88414" />
<ellipse cx="554.2" cy="405.8" rx="1.6" ry="1.8" fill="#a88414" />
<ellipse cx="613.0" cy="409.1" rx="3.6" ry="4.0" fill="#101010" />
<polygon points="594.0,406.6 608.0,402.1 617.5,405.1 617.5,411.6 602.0,417.6 594.0,414.6" fill="#d49c16" />
<polygon points="594.0,406.6 608.0,402.1 617.5,405.1 602.0,409.6" fill="#e8b424" />
<polygon points="608.0,400.6 613.0,399.1 616.0,400.6 616.0,405.6 611.0,407.1 608.0,405.6" fill="#c48e12" />
<polygon points="597.5,400.6 604.0,398.6 607.5,400.1 607.5,406.6 601.0,408.6 597.5,407.1" fill="#2c8cc6" />
<polygon points="597.5,400.6 604.0,398.6 607.5,400.1 601.0,402.1" fill="#1d6896" />
<polygon points="601.0,402.1 607.5,400.1 607.5,406.6 601.0,408.6" fill="#1f78ae" />
<line x1="607.0" y1="399.6" x2="608.5" y2="396.1" stroke="#333" stroke-width="0.90" />
<line x1="598.0" y1="409.6" x2="587.0" y2="417.1" stroke="#d09a12" stroke-width="3.40" />
<line x1="594.0" y1="412.6" x2="588.0" y2="417.6" stroke="#8a6a10" stroke-width="1.20" />
<polygon points="580.0,417.6 589.0,414.1 593.0,416.6 591.0,421.1 583.0,423.1 580.0,421.1" fill="#f0c226" />
<polygon points="581.5,418.6 589.0,415.8 591.5,417.2 584.0,420.1" fill="#b88c12" />
<ellipse cx="610.0" cy="412.1" rx="4.5" ry="5.0" fill="#141414" />
<ellipse cx="599.6" cy="416.6" rx="4.5" ry="5.0" fill="#141414" />
<ellipse cx="609.6" cy="411.6" rx="1.6" ry="1.8" fill="#a88414" />
<ellipse cx="599.2" cy="416.1" rx="1.6" ry="1.8" fill="#a88414" />
<ellipse cx="658.0" cy="419.4" rx="3.6" ry="4.0" fill="#101010" />
<polygon points="639.0,416.9 653.0,412.4 662.5,415.4 662.5,421.9 647.0,427.9 639.0,424.9" fill="#d49c16" />
<polygon points="639.0,416.9 653.0,412.4 662.5,415.4 647.0,419.9" fill="#e8b424" />
<polygon points="653.0,410.9 658.0,409.4 661.0,410.9 661.0,415.9 656.0,417.4 653.0,415.9" fill="#c48e12" />
<polygon points="642.5,410.9 649.0,408.9 652.5,410.4 652.5,416.9 646.0,418.9 642.5,417.4" fill="#2c8cc6" />
<polygon points="642.5,410.9 649.0,408.9 652.5,410.4 646.0,412.4" fill="#1d6896" />
<polygon points="646.0,412.4 652.5,410.4 652.5,416.9 646.0,418.9" fill="#1f78ae" />
<line x1="652.0" y1="409.9" x2="653.5" y2="406.4" stroke="#333" stroke-width="0.90" />
<line x1="643.0" y1="419.9" x2="632.0" y2="427.4" stroke="#d09a12" stroke-width="3.40" />
<line x1="639.0" y1="422.9" x2="633.0" y2="427.9" stroke="#8a6a10" stroke-width="1.20" />
<polygon points="625.0,427.9 634.0,424.4 638.0,426.9 636.0,431.4 628.0,433.4 625.0,431.4" fill="#f0c226" />
<polygon points="626.5,428.9 634.0,426.1 636.5,427.5 629.0,430.4" fill="#b88c12" />
<ellipse cx="655.0" cy="422.4" rx="4.5" ry="5.0" fill="#141414" />
<ellipse cx="644.6" cy="426.9" rx="4.5" ry="5.0" fill="#141414" />
<ellipse cx="654.6" cy="421.9" rx="1.6" ry="1.8" fill="#a88414" />
<ellipse cx="644.2" cy="426.4" rx="1.6" ry="1.8" fill="#a88414" />
<ellipse cx="438.5" cy="412.5" rx="3.6" ry="4.2" fill="#1c1c1c" />
<polygon points="417.0,410.5 431.0,406.0 442.5,409.0 442.5,414.0 428.0,419.0 417.0,416.0" fill="#c8640e" />
<polygon points="417.0,410.5 431.0,406.0 442.5,409.0 428.0,413.5" fill="#e8861e" />
<polygon points="417.0,410.5 428.0,413.5 428.0,419.0 417.0,416.0" fill="#a24c0a" />
<polygon points="418.0,412.0 426.5,414.5 426.5,416.5 418.0,414.0" fill="#1e1e1e" />
<polygon points="425.0,405.0 430.0,403.5 434.0,405.0 434.0,409.5 429.0,411.0 425.0,409.5" fill="#242424" />
<polygon points="425.0,405.0 430.0,403.5 434.0,405.0 429.0,406.5" fill="#d8781a" />
<line x1="432.5" y1="404.5" x2="432.5" y2="400.0" stroke="#1c1c1c" stroke-width="1.60" />
<ellipse cx="423.0" cy="418.0" rx="3.8" ry="4.2" fill="#141414" />
<ellipse cx="435.0" cy="416.3" rx="3.6" ry="4.0" fill="#141414" />
<polygon points="429.0,413.0 442.5,409.0 442.5,411.0 429.0,415.0" fill="#3a2410" />
<ellipse cx="462.1" cy="418.1" rx="3.6" ry="4.2" fill="#1c1c1c" />
<polygon points="440.6,416.1 454.6,411.6 466.1,414.6 466.1,419.6 451.6,424.6 440.6,421.6" fill="#c8640e" />
<polygon points="440.6,416.1 454.6,411.6 466.1,414.6 451.6,419.1" fill="#e8861e" />
<polygon points="440.6,416.1 451.6,419.1 451.6,424.6 440.6,421.6" fill="#a24c0a" />
<polygon points="441.6,417.6 450.1,420.1 450.1,422.1 441.6,419.6" fill="#1e1e1e" />
<polygon points="448.6,410.6 453.6,409.1 457.6,410.6 457.6,415.1 452.6,416.6 448.6,415.1" fill="#242424" />
<polygon points="448.6,410.6 453.6,409.1 457.6,410.6 452.6,412.1" fill="#d8781a" />
<line x1="456.1" y1="410.1" x2="456.1" y2="405.6" stroke="#1c1c1c" stroke-width="1.60" />
<ellipse cx="446.6" cy="423.6" rx="3.8" ry="4.2" fill="#141414" />
<ellipse cx="458.6" cy="421.9" rx="3.6" ry="4.0" fill="#141414" />
<polygon points="452.6,418.6 466.1,414.6 466.1,416.6 452.6,420.6" fill="#3a2410" />
<ellipse cx="485.7" cy="423.7" rx="3.6" ry="4.2" fill="#1c1c1c" />
<polygon points="464.2,421.7 478.2,417.2 489.7,420.2 489.7,425.2 475.2,430.2 464.2,427.2" fill="#c8640e" />
<polygon points="464.2,421.7 478.2,417.2 489.7,420.2 475.2,424.7" fill="#e8861e" />
<polygon points="464.2,421.7 475.2,424.7 475.2,430.2 464.2,427.2" fill="#a24c0a" />
<polygon points="465.2,423.2 473.7,425.7 473.7,427.7 465.2,425.2" fill="#1e1e1e" />
<polygon points="472.2,416.2 477.2,414.7 481.2,416.2 481.2,420.7 476.2,422.2 472.2,420.7" fill="#242424" />
<polygon points="472.2,416.2 477.2,414.7 481.2,416.2 476.2,417.7" fill="#d8781a" />
<line x1="479.7" y1="415.7" x2="479.7" y2="411.2" stroke="#1c1c1c" stroke-width="1.60" />
<ellipse cx="470.2" cy="429.2" rx="3.8" ry="4.2" fill="#141414" />
<ellipse cx="482.2" cy="427.5" rx="3.6" ry="4.0" fill="#141414" />
<polygon points="476.2,424.2 489.7,420.2 489.7,422.2 476.2,426.2" fill="#3a2410" />
<ellipse cx="509.3" cy="429.3" rx="3.6" ry="4.2" fill="#1c1c1c" />
<polygon points="487.8,427.3 501.8,422.8 513.3,425.8 513.3,430.8 498.8,435.8 487.8,432.8" fill="#c8640e" />
<polygon points="487.8,427.3 501.8,422.8 513.3,425.8 498.8,430.3" fill="#e8861e" />
<polygon points="487.8,427.3 498.8,430.3 498.8,435.8 487.8,432.8" fill="#a24c0a" />
<polygon points="488.8,428.8 497.3,431.3 497.3,433.3 488.8,430.8" fill="#1e1e1e" />
<polygon points="495.8,421.8 500.8,420.3 504.8,421.8 504.8,426.3 499.8,427.8 495.8,426.3" fill="#242424" />
<polygon points="495.8,421.8 500.8,420.3 504.8,421.8 499.8,423.3" fill="#d8781a" />
<line x1="503.3" y1="421.3" x2="503.3" y2="416.8" stroke="#1c1c1c" stroke-width="1.60" />
<ellipse cx="493.8" cy="434.8" rx="3.8" ry="4.2" fill="#141414" />
<ellipse cx="505.8" cy="433.1" rx="3.6" ry="4.0" fill="#141414" />
<polygon points="499.8,429.8 513.3,425.8 513.3,427.8 499.8,431.8" fill="#3a2410" />
<polygon points="462.7,404.0 473.2,401.0 478.7,403.0 478.7,405.5 468.2,408.8 462.7,406.8" fill="#3e4448" />
<polygon points="462.7,404.0 473.2,401.0 478.7,403.0 468.2,406.0" fill="#5a6266" />
<polygon points="465.7,397.0 472.7,395.0 477.2,397.0 477.2,402.0 469.7,404.5 465.7,402.5" fill="#4a5a58" />
<polygon points="465.7,397.0 472.7,395.0 477.2,397.0 469.7,399.0" fill="#76883c" />
<polygon points="466.5,398.3 469.3,399.5 469.3,402.6 466.5,401.5" fill="#7fc4d8" />
<polygon points="470.3,399.6 476.2,397.8 476.2,400.8 470.3,402.6" fill="#3f5a3a" />
<path d="M468.2 399.0 L466.2 391.5 Q465.7 389.3 463.7 389.8 L459.5 391.0 Q457.5 391.6 457.7 393.6 L458.5 401.0" fill="none" stroke="#b8c42a" stroke-width="2.800" stroke-linejoin="round"/>
<path d="M467.5 399.0 L465.5 392.0" stroke="#8e981c" stroke-width="1"/>
<polygon points="456.9,400.5 460.5,399.5 461.2,403.0 458.2,404.5" fill="#9aa61e" />
<polygon points="485.0,409.2 495.5,406.2 501.0,408.2 501.0,410.8 490.5,414.1 485.0,412.1" fill="#3e4448" />
<polygon points="485.0,409.2 495.5,406.2 501.0,408.2 490.5,411.2" fill="#5a6266" />
<polygon points="488.0,402.2 495.0,400.2 499.5,402.2 499.5,407.2 492.0,409.8 488.0,407.8" fill="#4a5a58" />
<polygon points="488.0,402.2 495.0,400.2 499.5,402.2 492.0,404.2" fill="#76883c" />
<polygon points="488.8,403.6 491.6,404.8 491.6,407.9 488.8,406.8" fill="#7fc4d8" />
<polygon points="492.6,404.9 498.5,403.1 498.5,406.1 492.6,407.9" fill="#3f5a3a" />
<path d="M490.5 404.2 L488.5 396.8 Q488.0 394.6 486.0 395.1 L481.8 396.2 Q479.8 396.9 480.0 398.9 L480.8 406.2" fill="none" stroke="#b8c42a" stroke-width="2.800" stroke-linejoin="round"/>
<path d="M489.8 404.2 L487.8 397.2" stroke="#8e981c" stroke-width="1"/>
<polygon points="479.2,405.8 482.8,404.8 483.5,408.2 480.5,409.8" fill="#9aa61e" />
<polygon points="507.3,414.5 517.8,411.5 523.3,413.5 523.3,416.0 512.8,419.3 507.3,417.3" fill="#3e4448" />
<polygon points="507.3,414.5 517.8,411.5 523.3,413.5 512.8,416.5" fill="#5a6266" />
<polygon points="510.3,407.5 517.3,405.5 521.8,407.5 521.8,412.5 514.3,415.0 510.3,413.0" fill="#4a5a58" />
<polygon points="510.3,407.5 517.3,405.5 521.8,407.5 514.3,409.5" fill="#76883c" />
<polygon points="511.1,408.8 513.9,410.0 513.9,413.1 511.1,412.0" fill="#7fc4d8" />
<polygon points="514.9,410.1 520.8,408.3 520.8,411.3 514.9,413.1" fill="#3f5a3a" />
<path d="M512.8 409.5 L510.8 402.0 Q510.3 399.8 508.3 400.3 L504.1 401.5 Q502.1 402.1 502.3 404.1 L503.1 411.5" fill="none" stroke="#b8c42a" stroke-width="2.800" stroke-linejoin="round"/>
<path d="M512.1 409.5 L510.1 402.5" stroke="#8e981c" stroke-width="1"/>
<polygon points="501.5,411.0 505.1,410.0 505.8,413.5 502.8,415.0" fill="#9aa61e" />
<polygon points="529.6,419.8 540.1,416.8 545.6,418.8 545.6,421.2 535.1,424.6 529.6,422.6" fill="#3e4448" />
<polygon points="529.6,419.8 540.1,416.8 545.6,418.8 535.1,421.8" fill="#5a6266" />
<polygon points="532.6,412.8 539.6,410.8 544.1,412.8 544.1,417.8 536.6,420.2 532.6,418.2" fill="#4a5a58" />
<polygon points="532.6,412.8 539.6,410.8 544.1,412.8 536.6,414.8" fill="#76883c" />
<polygon points="533.4,414.1 536.2,415.2 536.2,418.4 533.4,417.2" fill="#7fc4d8" />
<polygon points="537.2,415.4 543.1,413.6 543.1,416.6 537.2,418.4" fill="#3f5a3a" />
<path d="M535.1 414.8 L533.1 407.2 Q532.6 405.1 530.6 405.6 L526.4 406.8 Q524.4 407.4 524.6 409.4 L525.4 416.8" fill="none" stroke="#b8c42a" stroke-width="2.800" stroke-linejoin="round"/>
<path d="M534.4 414.8 L532.4 407.8" stroke="#8e981c" stroke-width="1"/>
<polygon points="523.8,416.2 527.4,415.2 528.1,418.8 525.1,420.2" fill="#9aa61e" />
<polygon points="551.9,425.0 562.4,422.0 567.9,424.0 567.9,426.5 557.4,429.8 551.9,427.8" fill="#3e4448" />
<polygon points="551.9,425.0 562.4,422.0 567.9,424.0 557.4,427.0" fill="#5a6266" />
<polygon points="554.9,418.0 561.9,416.0 566.4,418.0 566.4,423.0 558.9,425.5 554.9,423.5" fill="#4a5a58" />
<polygon points="554.9,418.0 561.9,416.0 566.4,418.0 558.9,420.0" fill="#76883c" />
<polygon points="555.7,419.3 558.5,420.5 558.5,423.6 555.7,422.5" fill="#7fc4d8" />
<polygon points="559.5,420.6 565.4,418.8 565.4,421.8 559.5,423.6" fill="#3f5a3a" />
<path d="M557.4 420.0 L555.4 412.5 Q554.9 410.3 552.9 410.8 L548.7 412.0 Q546.7 412.6 546.9 414.6 L547.7 422.0" fill="none" stroke="#b8c42a" stroke-width="2.800" stroke-linejoin="round"/>
<path d="M556.7 420.0 L554.7 413.0" stroke="#8e981c" stroke-width="1"/>
<polygon points="546.1,421.5 549.7,420.5 550.4,424.0 547.4,425.5" fill="#9aa61e" />
<polygon points="390.0,423.5 406.0,418.0 408.0,419.5 408.0,422.5 392.0,428.5" fill="#1d7c84" />
<ellipse cx="403.5" cy="424.5" rx="2.2" ry="2.5" fill="#141414" />
<ellipse cx="399.5" cy="426.0" rx="2.2" ry="2.5" fill="#141414" />
<g transform="rotate(-24 399.0 417.5)"><ellipse cx="399.0" cy="417.5" rx="7.800" ry="4.700" fill="#c2c5c8"/><ellipse cx="397.5" cy="416.3" rx="4.600" ry="3" fill="#f0f1f2"/><ellipse cx="405.5" cy="417.5" rx="2.200" ry="4.200" fill="#8a9095"/></g>
<ellipse cx="389.5" cy="433.5" rx="2.3" ry="2.6" fill="#141414" />
<ellipse cx="395.0" cy="432.0" rx="2.3" ry="2.6" fill="#141414" />
<polygon points="385.5,422.0 392.5,420.0 398.0,422.0 398.0,430.5 391.0,434.0 385.5,432.0" fill="#17838a" />
<polygon points="385.5,422.0 392.5,420.0 398.0,422.0 391.0,424.0" fill="#2aa4ac" />
<polygon points="391.0,424.0 398.0,422.0 398.0,430.5 391.0,434.0" fill="#0f666c" />
<polygon points="386.3,424.0 390.2,425.5 390.2,429.3 386.3,427.8" fill="#c4f2f6" />
<polygon points="412.2,428.6 428.2,423.1 430.2,424.6 430.2,427.6 414.2,433.6" fill="#1d7c84" />
<ellipse cx="425.7" cy="429.6" rx="2.2" ry="2.5" fill="#141414" />
<ellipse cx="421.7" cy="431.1" rx="2.2" ry="2.5" fill="#141414" />
<g transform="rotate(-24 421.2 422.6)"><ellipse cx="421.2" cy="422.6" rx="7.800" ry="4.700" fill="#c2c5c8"/><ellipse cx="419.7" cy="421.4" rx="4.600" ry="3" fill="#f0f1f2"/><ellipse cx="427.7" cy="422.6" rx="2.200" ry="4.200" fill="#8a9095"/></g>
<ellipse cx="411.7" cy="438.6" rx="2.3" ry="2.6" fill="#141414" />
<ellipse cx="417.2" cy="437.1" rx="2.3" ry="2.6" fill="#141414" />
<polygon points="407.7,427.1 414.7,425.1 420.2,427.1 420.2,435.6 413.2,439.1 407.7,437.1" fill="#17838a" />
<polygon points="407.7,427.1 414.7,425.1 420.2,427.1 413.2,429.1" fill="#2aa4ac" />
<polygon points="413.2,429.1 420.2,427.1 420.2,435.6 413.2,439.1" fill="#0f666c" />
<polygon points="408.5,429.1 412.4,430.6 412.4,434.4 408.5,432.9" fill="#c4f2f6" />
<polygon points="434.4,433.7 450.4,428.2 452.4,429.7 452.4,432.7 436.4,438.7" fill="#1d7c84" />
<ellipse cx="447.9" cy="434.7" rx="2.2" ry="2.5" fill="#141414" />
<ellipse cx="443.9" cy="436.2" rx="2.2" ry="2.5" fill="#141414" />
<g transform="rotate(-24 443.4 427.7)"><ellipse cx="443.4" cy="427.7" rx="7.800" ry="4.700" fill="#c2c5c8"/><ellipse cx="441.9" cy="426.5" rx="4.600" ry="3" fill="#f0f1f2"/><ellipse cx="449.9" cy="427.7" rx="2.200" ry="4.200" fill="#8a9095"/></g>
<ellipse cx="433.9" cy="443.7" rx="2.3" ry="2.6" fill="#141414" />
<ellipse cx="439.4" cy="442.2" rx="2.3" ry="2.6" fill="#141414" />
<polygon points="429.9,432.2 436.9,430.2 442.4,432.2 442.4,440.7 435.4,444.2 429.9,442.2" fill="#17838a" />
<polygon points="429.9,432.2 436.9,430.2 442.4,432.2 435.4,434.2" fill="#2aa4ac" />
<polygon points="435.4,434.2 442.4,432.2 442.4,440.7 435.4,444.2" fill="#0f666c" />
<polygon points="430.7,434.2 434.6,435.7 434.6,439.5 430.7,438.0" fill="#c4f2f6" />
<polygon points="456.6,438.8 472.6,433.3 474.6,434.8 474.6,437.8 458.6,443.8" fill="#1d7c84" />
<ellipse cx="470.1" cy="439.8" rx="2.2" ry="2.5" fill="#141414" />
<ellipse cx="466.1" cy="441.3" rx="2.2" ry="2.5" fill="#141414" />
<g transform="rotate(-24 465.6 432.8)"><ellipse cx="465.6" cy="432.8" rx="7.800" ry="4.700" fill="#c2c5c8"/><ellipse cx="464.1" cy="431.6" rx="4.600" ry="3" fill="#f0f1f2"/><ellipse cx="472.1" cy="432.8" rx="2.200" ry="4.200" fill="#8a9095"/></g>
<ellipse cx="456.1" cy="448.8" rx="2.3" ry="2.6" fill="#141414" />
<ellipse cx="461.6" cy="447.3" rx="2.3" ry="2.6" fill="#141414" />
<polygon points="452.1,437.3 459.1,435.3 464.6,437.3 464.6,445.8 457.6,449.3 452.1,447.3" fill="#17838a" />
<polygon points="452.1,437.3 459.1,435.3 464.6,437.3 457.6,439.3" fill="#2aa4ac" />
<polygon points="457.6,439.3 464.6,437.3 464.6,445.8 457.6,449.3" fill="#0f666c" />
<polygon points="452.9,439.3 456.8,440.8 456.8,444.6 452.9,443.1" fill="#c4f2f6" />
<polygon points="478.8,443.9 494.8,438.4 496.8,439.9 496.8,442.9 480.8,448.9" fill="#1d7c84" />
<ellipse cx="492.3" cy="444.9" rx="2.2" ry="2.5" fill="#141414" />
<ellipse cx="488.3" cy="446.4" rx="2.2" ry="2.5" fill="#141414" />
<g transform="rotate(-24 487.8 437.9)"><ellipse cx="487.8" cy="437.9" rx="7.800" ry="4.700" fill="#c2c5c8"/><ellipse cx="486.3" cy="436.7" rx="4.600" ry="3" fill="#f0f1f2"/><ellipse cx="494.3" cy="437.9" rx="2.200" ry="4.200" fill="#8a9095"/></g>
<ellipse cx="478.3" cy="453.9" rx="2.3" ry="2.6" fill="#141414" />
<ellipse cx="483.8" cy="452.4" rx="2.3" ry="2.6" fill="#141414" />
<polygon points="474.3,442.4 481.3,440.4 486.8,442.4 486.8,450.9 479.8,454.4 474.3,452.4" fill="#17838a" />
<polygon points="474.3,442.4 481.3,440.4 486.8,442.4 479.8,444.4" fill="#2aa4ac" />
<polygon points="479.8,444.4 486.8,442.4 486.8,450.9 479.8,454.4" fill="#0f666c" />
<polygon points="475.1,444.4 479.0,445.9 479.0,449.7 475.1,448.2" fill="#c4f2f6" />
<polygon points="501.0,449.0 517.0,443.5 519.0,445.0 519.0,448.0 503.0,454.0" fill="#1d7c84" />
<ellipse cx="514.5" cy="450.0" rx="2.2" ry="2.5" fill="#141414" />
<ellipse cx="510.5" cy="451.5" rx="2.2" ry="2.5" fill="#141414" />
<g transform="rotate(-24 510.0 443.0)"><ellipse cx="510.0" cy="443.0" rx="7.800" ry="4.700" fill="#c2c5c8"/><ellipse cx="508.5" cy="441.8" rx="4.600" ry="3" fill="#f0f1f2"/><ellipse cx="516.5" cy="443.0" rx="2.200" ry="4.200" fill="#8a9095"/></g>
<ellipse cx="500.5" cy="459.0" rx="2.3" ry="2.6" fill="#141414" />
<ellipse cx="506.0" cy="457.5" rx="2.3" ry="2.6" fill="#141414" />
<polygon points="496.5,447.5 503.5,445.5 509.0,447.5 509.0,456.0 502.0,459.5 496.5,457.5" fill="#17838a" />
<polygon points="496.5,447.5 503.5,445.5 509.0,447.5 502.0,449.5" fill="#2aa4ac" />
<polygon points="502.0,449.5 509.0,447.5 509.0,456.0 502.0,459.5" fill="#0f666c" />
<polygon points="497.3,449.5 501.2,451.0 501.2,454.8 497.3,453.3" fill="#c4f2f6" />
<polygon points="523.2,454.1 539.2,448.6 541.2,450.1 541.2,453.1 525.2,459.1" fill="#1d7c84" />
<ellipse cx="536.7" cy="455.1" rx="2.2" ry="2.5" fill="#141414" />
<ellipse cx="532.7" cy="456.6" rx="2.2" ry="2.5" fill="#141414" />
<g transform="rotate(-24 532.2 448.1)"><ellipse cx="532.2" cy="448.1" rx="7.800" ry="4.700" fill="#c2c5c8"/><ellipse cx="530.7" cy="446.9" rx="4.600" ry="3" fill="#f0f1f2"/><ellipse cx="538.7" cy="448.1" rx="2.200" ry="4.200" fill="#8a9095"/></g>
<ellipse cx="522.7" cy="464.1" rx="2.3" ry="2.6" fill="#141414" />
<ellipse cx="528.2" cy="462.6" rx="2.3" ry="2.6" fill="#141414" />
<polygon points="518.7,452.6 525.7,450.6 531.2,452.6 531.2,461.1 524.2,464.6 518.7,462.6" fill="#17838a" />
<polygon points="518.7,452.6 525.7,450.6 531.2,452.6 524.2,454.6" fill="#2aa4ac" />
<polygon points="524.2,454.6 531.2,452.6 531.2,461.1 524.2,464.6" fill="#0f666c" />
<polygon points="519.5,454.6 523.4,456.1 523.4,459.9 519.5,458.4" fill="#c4f2f6" />
<polygon points="545.4,459.2 561.4,453.7 563.4,455.2 563.4,458.2 547.4,464.2" fill="#1d7c84" />
<ellipse cx="558.9" cy="460.2" rx="2.2" ry="2.5" fill="#141414" />
<ellipse cx="554.9" cy="461.7" rx="2.2" ry="2.5" fill="#141414" />
<g transform="rotate(-24 554.4 453.2)"><ellipse cx="554.4" cy="453.2" rx="7.800" ry="4.700" fill="#c2c5c8"/><ellipse cx="552.9" cy="452.0" rx="4.600" ry="3" fill="#f0f1f2"/><ellipse cx="560.9" cy="453.2" rx="2.200" ry="4.200" fill="#8a9095"/></g>
<ellipse cx="544.9" cy="469.2" rx="2.3" ry="2.6" fill="#141414" />
<ellipse cx="550.4" cy="467.7" rx="2.3" ry="2.6" fill="#141414" />
<polygon points="540.9,457.7 547.9,455.7 553.4,457.7 553.4,466.2 546.4,469.7 540.9,467.7" fill="#17838a" />
<polygon points="540.9,457.7 547.9,455.7 553.4,457.7 546.4,459.7" fill="#2aa4ac" />
<polygon points="546.4,459.7 553.4,457.7 553.4,466.2 546.4,469.7" fill="#0f666c" />
<polygon points="541.7,459.7 545.6,461.2 545.6,465.0 541.7,463.5" fill="#c4f2f6" />
<polygon points="338.4,412.1 426.9,432.5 431.4,430.8 342.9,410.4" fill="#f0b424" />
<polygon points="338.4,412.1 426.9,432.5 426.9,439.7 338.4,419.3" fill="#e0a01c" />
<path d="M346.6 448.9 L349.4 414.4 Q349.6 411.9 351.9 411.1 L356.7 408.3 Q358.7 407.7 358.9 410.1 L361.5 444.6" fill="none" stroke="#c4921c" stroke-width="1.900" stroke-linejoin="round"/>
<line x1="347.9" y1="432.9" x2="360.7" y2="428.6" stroke="#c4921c" stroke-width="1.60" />
<line x1="347.0" y1="442.9" x2="361.3" y2="438.6" stroke="#c4921c" stroke-width="1.60" />
<path d="M405.8 462.6 L408.6 428.1 Q408.8 425.6 411.1 424.8 L415.9 422.0 Q417.9 421.4 418.1 423.8 L420.7 458.3" fill="none" stroke="#c4921c" stroke-width="1.900" stroke-linejoin="round"/>
<line x1="407.1" y1="446.6" x2="419.9" y2="442.3" stroke="#c4921c" stroke-width="1.60" />
<line x1="406.2" y1="456.6" x2="420.5" y2="452.3" stroke="#c4921c" stroke-width="1.60" />
<polygon points="373.9,412.8 377.9,410.8 387.9,413.1 383.9,415.1" fill="#f06a48" />
<polygon points="373.9,412.8 383.9,415.1 383.9,421.1 373.9,418.8" fill="#d9452a" />
<polygon points="383.9,415.1 387.9,413.1 387.9,419.1 383.9,421.1" fill="#a82e18" />
<line x1="383.4" y1="429.5" x2="383.4" y2="444.5" stroke="#9a7a30" stroke-width="0.80" />
<polygon points="452.7,439.8 541.2,459.2 545.7,457.6 457.2,438.1" fill="#f0b424" />
<polygon points="452.7,439.8 541.2,459.2 541.2,466.4 452.7,447.0" fill="#e0a01c" />
<path d="M460.9 476.5 L463.7 442.0 Q463.9 439.5 466.2 438.7 L471.0 435.9 Q473.0 435.3 473.2 437.7 L475.8 472.2" fill="none" stroke="#c4921c" stroke-width="1.900" stroke-linejoin="round"/>
<line x1="462.2" y1="460.5" x2="475.0" y2="456.2" stroke="#c4921c" stroke-width="1.60" />
<line x1="461.3" y1="470.5" x2="475.6" y2="466.2" stroke="#c4921c" stroke-width="1.60" />
<path d="M520.1 489.5 L522.9 455.0 Q523.1 452.5 525.4 451.7 L530.2 448.9 Q532.2 448.3 532.4 450.7 L535.0 485.2" fill="none" stroke="#c4921c" stroke-width="1.900" stroke-linejoin="round"/>
<line x1="521.4" y1="473.5" x2="534.2" y2="469.2" stroke="#c4921c" stroke-width="1.60" />
<line x1="520.5" y1="483.5" x2="534.8" y2="479.2" stroke="#c4921c" stroke-width="1.60" />
<polygon points="488.2,440.1 492.2,438.1 502.2,440.4 498.2,442.4" fill="#f06a48" />
<polygon points="488.2,440.1 498.2,442.4 498.2,448.4 488.2,446.1" fill="#d9452a" />
<polygon points="498.2,442.4 502.2,440.4 502.2,446.4 498.2,448.4" fill="#a82e18" />
<line x1="497.7" y1="456.7" x2="497.7" y2="471.7" stroke="#9a7a30" stroke-width="0.80" />
<polygon points="607.5,452.3 696.0,469.7 700.5,468.0 612.0,450.6" fill="#f0b424" />
<polygon points="607.5,452.3 696.0,469.7 696.0,476.9 607.5,459.5" fill="#e0a01c" />
<path d="M615.7 489.8 L618.5 454.3 Q618.7 451.8 621.0 451.0 L625.8 448.2 Q627.8 447.6 628.0 450.0 L630.6 485.5" fill="none" stroke="#c4921c" stroke-width="1.900" stroke-linejoin="round"/>
<line x1="617.0" y1="472.8" x2="629.8" y2="468.5" stroke="#c4921c" stroke-width="1.60" />
<line x1="616.1" y1="483.8" x2="630.4" y2="479.5" stroke="#c4921c" stroke-width="1.60" />
<path d="M674.9 501.4 L677.7 465.9 Q677.9 463.4 680.2 462.6 L685.0 459.8 Q687.0 459.2 687.2 461.6 L689.8 497.1" fill="none" stroke="#c4921c" stroke-width="1.900" stroke-linejoin="round"/>
<line x1="676.2" y1="484.4" x2="689.0" y2="480.1" stroke="#c4921c" stroke-width="1.60" />
<line x1="675.3" y1="495.4" x2="689.6" y2="491.1" stroke="#c4921c" stroke-width="1.60" />
<polygon points="643.0,452.8 647.0,450.8 657.0,453.1 653.0,455.1" fill="#f06a48" />
<polygon points="643.0,452.8 653.0,455.1 653.0,461.1 643.0,458.8" fill="#d9452a" />
<polygon points="653.0,455.1 657.0,453.1 657.0,459.1 653.0,461.1" fill="#a82e18" />
<line x1="652.5" y1="468.2" x2="652.5" y2="483.2" stroke="#9a7a30" stroke-width="0.80" />
<polygon points="563.0,465.3 651.5,483.4 656.0,481.7 567.5,463.6" fill="#f0b424" />
<polygon points="563.0,465.3 651.5,483.4 651.5,490.6 563.0,472.5" fill="#e0a01c" />
<path d="M571.2 503.3 L574.0 467.3 Q574.2 464.8 576.5 464.0 L581.3 461.2 Q583.3 460.6 583.5 463.0 L586.1 499.0" fill="none" stroke="#c4921c" stroke-width="1.900" stroke-linejoin="round"/>
<line x1="572.5" y1="485.8" x2="585.3" y2="481.5" stroke="#c4921c" stroke-width="1.60" />
<line x1="571.6" y1="497.3" x2="585.9" y2="493.0" stroke="#c4921c" stroke-width="1.60" />
<path d="M630.4 515.4 L633.2 479.4 Q633.4 476.9 635.7 476.1 L640.5 473.3 Q642.5 472.7 642.7 475.1 L645.3 511.1" fill="none" stroke="#c4921c" stroke-width="1.900" stroke-linejoin="round"/>
<line x1="631.7" y1="497.9" x2="644.5" y2="493.6" stroke="#c4921c" stroke-width="1.60" />
<line x1="630.8" y1="509.4" x2="645.1" y2="505.1" stroke="#c4921c" stroke-width="1.60" />
<polygon points="598.5,466.5 602.5,464.5 612.5,466.8 608.5,468.8" fill="#f06a48" />
<polygon points="598.5,466.5 608.5,468.8 608.5,474.8 598.5,472.5" fill="#d9452a" />
<polygon points="608.5,468.8 612.5,466.8 612.5,472.8 608.5,474.8" fill="#a82e18" />
<line x1="608.0" y1="481.5" x2="608.0" y2="496.5" stroke="#9a7a30" stroke-width="0.80" />
<ellipse cx="325.0" cy="454.6" rx="1.8" ry="2.0" fill="#3a3a3a" />
<ellipse cx="329.0" cy="455.5" rx="1.8" ry="2.0" fill="#3a3a3a" />
<ellipse cx="348.0" cy="459.8" rx="1.8" ry="2.0" fill="#3a3a3a" />
<ellipse cx="352.0" cy="460.6" rx="1.8" ry="2.0" fill="#3a3a3a" />
<polygon points="322.0,449.4 324.5,448.2 356.0,455.4 354.0,456.6" fill="#a4a8ac" />
<polygon points="322.0,449.4 354.0,456.6 354.0,459.0 322.0,451.8" fill="#6a6a6a" />
<ellipse cx="359.0" cy="464.1" rx="2.0" ry="2.2" fill="#333" />
<ellipse cx="367.0" cy="463.6" rx="2.0" ry="2.2" fill="#333" />
<polygon points="353.0,451.6 359.0,449.6 363.0,451.1 363.0,456.6 370.0,458.6 370.0,463.6 361.0,465.1 353.0,461.6" fill="#727272" />
<polygon points="353.0,451.6 359.0,449.6 363.0,451.1 357.0,453.1" fill="#a0a0a0" />
<polygon points="361.0,460.6 370.0,458.6 370.0,463.6 361.0,465.1" fill="#666666" />
<polygon points="357.0,453.1 363.0,451.1 363.0,456.6 370.0,458.6 361.0,460.6 357.0,459.1" fill="#848484" />
<polygon points="357.5,454.1 362.5,452.6 362.5,456.1 357.5,457.6" fill="#6c6c6c" />
<line x1="355.0" y1="451.6" x2="355.0" y2="447.1" stroke="#6a6a6a" stroke-width="1.00" />
<line x1="360.0" y1="450.6" x2="360.0" y2="446.1" stroke="#6a6a6a" stroke-width="1.00" />
<ellipse cx="392.0" cy="469.7" rx="1.8" ry="2.0" fill="#3a3a3a" />
<ellipse cx="396.0" cy="470.6" rx="1.8" ry="2.0" fill="#3a3a3a" />
<ellipse cx="415.0" cy="474.9" rx="1.8" ry="2.0" fill="#3a3a3a" />
<ellipse cx="419.0" cy="475.8" rx="1.8" ry="2.0" fill="#3a3a3a" />
<polygon points="389.0,464.5 391.5,463.3 423.0,470.5 421.0,471.7" fill="#a4a8ac" />
<polygon points="389.0,464.5 421.0,471.7 421.0,474.1 389.0,466.9" fill="#6a6a6a" />
<ellipse cx="426.0" cy="479.2" rx="2.0" ry="2.2" fill="#333" />
<ellipse cx="434.0" cy="478.7" rx="2.0" ry="2.2" fill="#333" />
<polygon points="420.0,466.7 426.0,464.7 430.0,466.2 430.0,471.7 437.0,473.7 437.0,478.7 428.0,480.2 420.0,476.7" fill="#727272" />
<polygon points="420.0,466.7 426.0,464.7 430.0,466.2 424.0,468.2" fill="#a0a0a0" />
<polygon points="428.0,475.7 437.0,473.7 437.0,478.7 428.0,480.2" fill="#666666" />
<polygon points="424.0,468.2 430.0,466.2 430.0,471.7 437.0,473.7 428.0,475.7 424.0,474.2" fill="#848484" />
<polygon points="424.5,469.2 429.5,467.7 429.5,471.2 424.5,472.7" fill="#6c6c6c" />
<line x1="422.0" y1="466.7" x2="422.0" y2="462.2" stroke="#6a6a6a" stroke-width="1.00" />
<line x1="427.0" y1="465.7" x2="427.0" y2="461.2" stroke="#6a6a6a" stroke-width="1.00" />
<polygon points="295.5,462.8 301.5,465.3 313.5,461.8 313.5,459.3 301.5,462.3 295.5,460.3" fill="#2e2e2e" />
<polygon points="294.5,450.3 303.5,452.8 303.5,463.8 294.5,460.8" fill="#6e6e6e" />
<polygon points="303.5,452.8 314.0,449.8 314.0,460.8 303.5,463.8" fill="#3e3e3e" />
<polygon points="294.5,450.3 305.0,447.6 314.0,449.8 303.5,452.8" fill="#59524c" />
<line x1="305.3" y1="452.9" x2="305.3" y2="463.1" stroke="#262626" stroke-width="0.90" />
<line x1="307.6" y1="452.2" x2="307.6" y2="462.4" stroke="#262626" stroke-width="0.90" />
<line x1="309.9" y1="451.6" x2="309.9" y2="461.8" stroke="#262626" stroke-width="0.90" />
<line x1="312.2" y1="450.9" x2="312.2" y2="461.1" stroke="#262626" stroke-width="0.90" />
<line x1="296.2" y1="451.5" x2="296.2" y2="461.1" stroke="#585858" stroke-width="0.80" />
<line x1="298.8" y1="452.2" x2="298.8" y2="461.9" stroke="#585858" stroke-width="0.80" />
<line x1="301.4" y1="452.9" x2="301.4" y2="462.7" stroke="#585858" stroke-width="0.80" />
<line x1="300.5" y1="449.9" x2="300.5" y2="446.9" stroke="#4a3a30" stroke-width="1.30" />
<line x1="303.5" y1="449.6" x2="303.5" y2="446.6" stroke="#4a3a30" stroke-width="1.30" />
<line x1="306.5" y1="449.3" x2="306.5" y2="446.3" stroke="#4a3a30" stroke-width="1.30" />
<polygon points="318.0,467.8 324.0,470.3 336.0,466.8 336.0,464.3 324.0,467.3 318.0,465.3" fill="#2e2e2e" />
<polygon points="317.0,455.3 326.0,457.8 326.0,468.8 317.0,465.8" fill="#6e6e6e" />
<polygon points="326.0,457.8 336.5,454.8 336.5,465.8 326.0,468.8" fill="#3e3e3e" />
<polygon points="317.0,455.3 327.5,452.6 336.5,454.8 326.0,457.8" fill="#59524c" />
<line x1="327.8" y1="457.9" x2="327.8" y2="468.1" stroke="#262626" stroke-width="0.90" />
<line x1="330.1" y1="457.2" x2="330.1" y2="467.4" stroke="#262626" stroke-width="0.90" />
<line x1="332.4" y1="456.6" x2="332.4" y2="466.8" stroke="#262626" stroke-width="0.90" />
<line x1="334.7" y1="455.9" x2="334.7" y2="466.1" stroke="#262626" stroke-width="0.90" />
<line x1="318.7" y1="456.5" x2="318.7" y2="466.1" stroke="#585858" stroke-width="0.80" />
<line x1="321.3" y1="457.2" x2="321.3" y2="466.9" stroke="#585858" stroke-width="0.80" />
<line x1="323.9" y1="457.9" x2="323.9" y2="467.7" stroke="#585858" stroke-width="0.80" />
<line x1="323.0" y1="454.9" x2="323.0" y2="451.9" stroke="#4a3a30" stroke-width="1.30" />
<line x1="326.0" y1="454.6" x2="326.0" y2="451.6" stroke="#4a3a30" stroke-width="1.30" />
<line x1="329.0" y1="454.3" x2="329.0" y2="451.3" stroke="#4a3a30" stroke-width="1.30" />
<polygon points="340.5,472.8 346.5,475.3 358.5,471.8 358.5,469.3 346.5,472.3 340.5,470.3" fill="#2e2e2e" />
<polygon points="339.5,460.3 348.5,462.8 348.5,473.8 339.5,470.8" fill="#6e6e6e" />
<polygon points="348.5,462.8 359.0,459.8 359.0,470.8 348.5,473.8" fill="#3e3e3e" />
<polygon points="339.5,460.3 350.0,457.6 359.0,459.8 348.5,462.8" fill="#59524c" />
<line x1="350.3" y1="462.9" x2="350.3" y2="473.1" stroke="#262626" stroke-width="0.90" />
<line x1="352.6" y1="462.2" x2="352.6" y2="472.4" stroke="#262626" stroke-width="0.90" />
<line x1="354.9" y1="461.6" x2="354.9" y2="471.8" stroke="#262626" stroke-width="0.90" />
<line x1="357.2" y1="460.9" x2="357.2" y2="471.1" stroke="#262626" stroke-width="0.90" />
<line x1="341.2" y1="461.5" x2="341.2" y2="471.1" stroke="#585858" stroke-width="0.80" />
<line x1="343.8" y1="462.2" x2="343.8" y2="471.9" stroke="#585858" stroke-width="0.80" />
<line x1="346.4" y1="462.9" x2="346.4" y2="472.7" stroke="#585858" stroke-width="0.80" />
<line x1="345.5" y1="459.9" x2="345.5" y2="456.9" stroke="#4a3a30" stroke-width="1.30" />
<line x1="348.5" y1="459.6" x2="348.5" y2="456.6" stroke="#4a3a30" stroke-width="1.30" />
<line x1="351.5" y1="459.3" x2="351.5" y2="456.3" stroke="#4a3a30" stroke-width="1.30" />
<polygon points="363.0,477.8 369.0,480.3 381.0,476.8 381.0,474.3 369.0,477.3 363.0,475.3" fill="#2e2e2e" />
<polygon points="362.0,465.3 371.0,467.8 371.0,478.8 362.0,475.8" fill="#6e6e6e" />
<polygon points="371.0,467.8 381.5,464.8 381.5,475.8 371.0,478.8" fill="#3e3e3e" />
<polygon points="362.0,465.3 372.5,462.6 381.5,464.8 371.0,467.8" fill="#59524c" />
<line x1="372.8" y1="467.9" x2="372.8" y2="478.1" stroke="#262626" stroke-width="0.90" />
<line x1="375.1" y1="467.2" x2="375.1" y2="477.4" stroke="#262626" stroke-width="0.90" />
<line x1="377.4" y1="466.6" x2="377.4" y2="476.8" stroke="#262626" stroke-width="0.90" />
<line x1="379.7" y1="465.9" x2="379.7" y2="476.1" stroke="#262626" stroke-width="0.90" />
<line x1="363.7" y1="466.5" x2="363.7" y2="476.1" stroke="#585858" stroke-width="0.80" />
<line x1="366.3" y1="467.2" x2="366.3" y2="476.9" stroke="#585858" stroke-width="0.80" />
<line x1="368.9" y1="467.9" x2="368.9" y2="477.7" stroke="#585858" stroke-width="0.80" />
<line x1="368.0" y1="464.9" x2="368.0" y2="461.9" stroke="#4a3a30" stroke-width="1.30" />
<line x1="371.0" y1="464.6" x2="371.0" y2="461.6" stroke="#4a3a30" stroke-width="1.30" />
<line x1="374.0" y1="464.3" x2="374.0" y2="461.3" stroke="#4a3a30" stroke-width="1.30" />
<polygon points="385.5,482.8 391.5,485.3 403.5,481.8 403.5,479.3 391.5,482.3 385.5,480.3" fill="#2e2e2e" />
<polygon points="384.5,470.3 393.5,472.8 393.5,483.8 384.5,480.8" fill="#6e6e6e" />
<polygon points="393.5,472.8 404.0,469.8 404.0,480.8 393.5,483.8" fill="#3e3e3e" />
<polygon points="384.5,470.3 395.0,467.6 404.0,469.8 393.5,472.8" fill="#59524c" />
<line x1="395.3" y1="472.9" x2="395.3" y2="483.1" stroke="#262626" stroke-width="0.90" />
<line x1="397.6" y1="472.2" x2="397.6" y2="482.4" stroke="#262626" stroke-width="0.90" />
<line x1="399.9" y1="471.6" x2="399.9" y2="481.8" stroke="#262626" stroke-width="0.90" />
<line x1="402.2" y1="470.9" x2="402.2" y2="481.1" stroke="#262626" stroke-width="0.90" />
<line x1="386.2" y1="471.5" x2="386.2" y2="481.1" stroke="#585858" stroke-width="0.80" />
<line x1="388.8" y1="472.2" x2="388.8" y2="481.9" stroke="#585858" stroke-width="0.80" />
<line x1="391.4" y1="472.9" x2="391.4" y2="482.7" stroke="#585858" stroke-width="0.80" />
<line x1="390.5" y1="469.9" x2="390.5" y2="466.9" stroke="#4a3a30" stroke-width="1.30" />
<line x1="393.5" y1="469.6" x2="393.5" y2="466.6" stroke="#4a3a30" stroke-width="1.30" />
<line x1="396.5" y1="469.3" x2="396.5" y2="466.3" stroke="#4a3a30" stroke-width="1.30" />
<polygon points="408.0,487.8 414.0,490.3 426.0,486.8 426.0,484.3 414.0,487.3 408.0,485.3" fill="#2e2e2e" />
<polygon points="407.0,475.3 416.0,477.8 416.0,488.8 407.0,485.8" fill="#6e6e6e" />
<polygon points="416.0,477.8 426.5,474.8 426.5,485.8 416.0,488.8" fill="#3e3e3e" />
<polygon points="407.0,475.3 417.5,472.6 426.5,474.8 416.0,477.8" fill="#59524c" />
<line x1="417.8" y1="477.9" x2="417.8" y2="488.1" stroke="#262626" stroke-width="0.90" />
<line x1="420.1" y1="477.2" x2="420.1" y2="487.4" stroke="#262626" stroke-width="0.90" />
<line x1="422.4" y1="476.6" x2="422.4" y2="486.8" stroke="#262626" stroke-width="0.90" />
<line x1="424.7" y1="475.9" x2="424.7" y2="486.1" stroke="#262626" stroke-width="0.90" />
<line x1="408.7" y1="476.5" x2="408.7" y2="486.1" stroke="#585858" stroke-width="0.80" />
<line x1="411.3" y1="477.2" x2="411.3" y2="486.9" stroke="#585858" stroke-width="0.80" />
<line x1="413.9" y1="477.9" x2="413.9" y2="487.7" stroke="#585858" stroke-width="0.80" />
<line x1="413.0" y1="474.9" x2="413.0" y2="471.9" stroke="#4a3a30" stroke-width="1.30" />
<line x1="416.0" y1="474.6" x2="416.0" y2="471.6" stroke="#4a3a30" stroke-width="1.30" />
<line x1="419.0" y1="474.3" x2="419.0" y2="471.3" stroke="#4a3a30" stroke-width="1.30" />
<ellipse cx="460.0" cy="484.7" rx="1.8" ry="2.0" fill="#3a3a3a" />
<ellipse cx="464.0" cy="485.6" rx="1.8" ry="2.0" fill="#3a3a3a" />
<ellipse cx="482.0" cy="489.6" rx="1.8" ry="2.0" fill="#3a3a3a" />
<ellipse cx="486.0" cy="490.5" rx="1.8" ry="2.0" fill="#3a3a3a" />
<polygon points="457.0,479.5 459.5,478.3 490.0,485.3 488.0,486.5" fill="#a4a8ac" />
<polygon points="457.0,479.5 488.0,486.5 488.0,488.9 457.0,481.9" fill="#6a6a6a" />
<ellipse cx="493.0" cy="494.0" rx="2.0" ry="2.2" fill="#333" />
<ellipse cx="501.0" cy="493.5" rx="2.0" ry="2.2" fill="#333" />
<polygon points="487.0,481.5 493.0,479.5 497.0,481.0 497.0,486.5 504.0,488.5 504.0,493.5 495.0,495.0 487.0,491.5" fill="#727272" />
<polygon points="487.0,481.5 493.0,479.5 497.0,481.0 491.0,483.0" fill="#a0a0a0" />
<polygon points="495.0,490.5 504.0,488.5 504.0,493.5 495.0,495.0" fill="#666666" />
<polygon points="491.0,483.0 497.0,481.0 497.0,486.5 504.0,488.5 495.0,490.5 491.0,489.0" fill="#848484" />
<polygon points="491.5,484.0 496.5,482.5 496.5,486.0 491.5,487.5" fill="#6c6c6c" />
<line x1="489.0" y1="481.5" x2="489.0" y2="477.0" stroke="#6a6a6a" stroke-width="1.00" />
<line x1="494.0" y1="480.5" x2="494.0" y2="476.0" stroke="#6a6a6a" stroke-width="1.00" />
<polygon points="429.9,487.0 433.4,485.8 450.7,490.6 447.2,491.8" fill="#a2a2a2" />
<polygon points="429.9,487.0 447.2,491.8 447.2,497.4 429.9,492.6" fill="#7a7a7a" />
<polygon points="447.2,491.8 450.7,490.6 450.7,496.2 447.2,497.4" fill="#2e2e2e" />
<polygon points="452.3,492.1 455.8,490.9 473.1,495.7 469.6,496.9" fill="#a2a2a2" />
<polygon points="452.3,492.1 469.6,496.9 469.6,502.5 452.3,497.7" fill="#7a7a7a" />
<polygon points="469.6,496.9 473.1,495.7 473.1,501.3 469.6,502.5" fill="#2e2e2e" />
<polygon points="474.7,497.2 478.2,496.0 495.5,500.8 492.0,502.0" fill="#a2a2a2" />
<polygon points="474.7,497.2 492.0,502.0 492.0,507.6 474.7,502.8" fill="#7a7a7a" />
<polygon points="492.0,502.0 495.5,500.8 495.5,506.4 492.0,507.6" fill="#2e2e2e" />
<polygon points="497.1,502.3 500.6,501.1 517.9,505.9 514.4,507.1" fill="#a2a2a2" />
<polygon points="497.1,502.3 514.4,507.1 514.4,512.7 497.1,507.9" fill="#7a7a7a" />
<polygon points="514.4,507.1 517.9,505.9 517.9,511.5 514.4,512.7" fill="#2e2e2e" />
<polygon points="519.5,507.4 523.0,506.2 540.3,511.0 536.8,512.2" fill="#a2a2a2" />
<polygon points="519.5,507.4 536.8,512.2 536.8,517.8 519.5,513.0" fill="#7a7a7a" />
<polygon points="536.8,512.2 540.3,511.0 540.3,516.6 536.8,517.8" fill="#2e2e2e" />
<polygon points="266.8,465.3 270.3,464.1 287.6,468.9 284.1,470.1" fill="#a2a2a2" />
<polygon points="266.8,465.3 284.1,470.1 284.1,475.7 266.8,470.9" fill="#7a7a7a" />
<polygon points="284.1,470.1 287.6,468.9 287.6,474.5 284.1,475.7" fill="#2e2e2e" />
<polygon points="289.4,470.4 292.9,469.2 310.2,474.0 306.7,475.2" fill="#a2a2a2" />
<polygon points="289.4,470.4 306.7,475.2 306.7,480.8 289.4,476.0" fill="#7a7a7a" />
<polygon points="306.7,475.2 310.2,474.0 310.2,479.6 306.7,480.8" fill="#2e2e2e" />
<polygon points="312.0,475.5 315.5,474.3 332.8,479.1 329.3,480.3" fill="#a2a2a2" />
<polygon points="312.0,475.5 329.3,480.3 329.3,485.9 312.0,481.1" fill="#7a7a7a" />
<polygon points="329.3,480.3 332.8,479.1 332.8,484.7 329.3,485.9" fill="#2e2e2e" />
<polygon points="334.7,480.6 338.2,479.4 355.5,484.2 352.0,485.4" fill="#a2a2a2" />
<polygon points="334.7,480.6 352.0,485.4 352.0,491.0 334.7,486.2" fill="#7a7a7a" />
<polygon points="352.0,485.4 355.5,484.2 355.5,489.8 352.0,491.0" fill="#2e2e2e" />
<polygon points="357.3,485.7 360.8,484.5 378.1,489.3 374.6,490.5" fill="#a2a2a2" />
<polygon points="357.3,485.7 374.6,490.5 374.6,496.1 357.3,491.3" fill="#7a7a7a" />
<polygon points="374.6,490.5 378.1,489.3 378.1,494.9 374.6,496.1" fill="#2e2e2e" />
<polygon points="379.9,490.8 383.4,489.6 400.7,494.4 397.2,495.6" fill="#a2a2a2" />
<polygon points="379.9,490.8 397.2,495.6 397.2,501.2 379.9,496.4" fill="#7a7a7a" />
<polygon points="397.2,495.6 400.7,494.4 400.7,500.0 397.2,501.2" fill="#2e2e2e" />
<polygon points="402.5,495.9 406.0,494.7 423.3,499.5 419.8,500.7" fill="#a2a2a2" />
<polygon points="402.5,495.9 419.8,500.7 419.8,506.3 402.5,501.5" fill="#7a7a7a" />
<polygon points="419.8,500.7 423.3,499.5 423.3,505.1 419.8,506.3" fill="#2e2e2e" />
<polygon points="425.1,501.0 428.6,499.8 445.9,504.6 442.4,505.8" fill="#a2a2a2" />
<polygon points="425.1,501.0 442.4,505.8 442.4,511.4 425.1,506.6" fill="#7a7a7a" />
<polygon points="442.4,505.8 445.9,504.6 445.9,510.2 442.4,511.4" fill="#2e2e2e" />
<polygon points="447.8,506.1 451.3,504.9 468.6,509.7 465.1,510.9" fill="#a2a2a2" />
<polygon points="447.8,506.1 465.1,510.9 465.1,516.5 447.8,511.7" fill="#7a7a7a" />
<polygon points="465.1,510.9 468.6,509.7 468.6,515.3 465.1,516.5" fill="#2e2e2e" />
<polygon points="470.4,511.2 473.9,510.0 491.2,514.8 487.7,516.0" fill="#a2a2a2" />
<polygon points="470.4,511.2 487.7,516.0 487.7,521.6 470.4,516.8" fill="#7a7a7a" />
<polygon points="487.7,516.0 491.2,514.8 491.2,520.4 487.7,521.6" fill="#2e2e2e" />
<polygon points="493.0,516.3 496.5,515.1 513.8,519.9 510.3,521.1" fill="#a2a2a2" />
<polygon points="493.0,516.3 510.3,521.1 510.3,526.7 493.0,521.9" fill="#7a7a7a" />
<polygon points="510.3,521.1 513.8,519.9 513.8,525.5 510.3,526.7" fill="#2e2e2e" />
<rect x="442.3" y="279.0" width="12.2" height="292.5" fill="url(#mast)"/>
<line x1="443.0" y1="279.0" x2="443.0" y2="571.5" stroke="#3a4145" stroke-width="1.60" />
<line x1="453.8" y1="279.0" x2="453.8" y2="571.5" stroke="#3a4145" stroke-width="1.60" />
<polygon points="444.3,265.0 450.0,231.5 456.5,231.5 454.8,265.0" fill="url(#mast)" stroke="#3a4044" stroke-width="1.300"/>
<line x1="450.5" y1="233.0" x2="394.0" y2="276.5" stroke="#8a9296" stroke-width="1.20" />
<line x1="456.0" y1="233.0" x2="478.0" y2="256.5" stroke="#8a9296" stroke-width="1.10" />
<line x1="455.5" y1="234.0" x2="468.0" y2="258.0" stroke="#8a9296" stroke-width="0.90" />
<polygon points="454.0,262.5 491.0,255.8 491.0,258.6 454.0,265.8" fill="#4a4f53" />
<line x1="458.0" y1="261.8" x2="458.0" y2="257.5" stroke="#c8ccd0" stroke-width="0.70" />
<line x1="463.0" y1="260.9" x2="463.0" y2="256.6" stroke="#c8ccd0" stroke-width="0.70" />
<line x1="468.0" y1="260.0" x2="468.0" y2="255.7" stroke="#c8ccd0" stroke-width="0.70" />
<line x1="473.0" y1="259.1" x2="473.0" y2="254.8" stroke="#c8ccd0" stroke-width="0.70" />
<line x1="478.0" y1="258.2" x2="478.0" y2="253.9" stroke="#c8ccd0" stroke-width="0.70" />
<line x1="483.0" y1="257.3" x2="483.0" y2="253.0" stroke="#c8ccd0" stroke-width="0.70" />
<line x1="488.0" y1="256.4" x2="488.0" y2="252.1" stroke="#c8ccd0" stroke-width="0.70" />
<line x1="455.0" y1="258.5" x2="491.0" y2="251.8" stroke="#c0c6ca" stroke-width="0.70" />
<polygon points="476.0,259.0 480.0,258.0 480.0,275.0 476.0,276.0" fill="#7c7c7c" />
<polygon points="480.0,258.0 491.0,256.5 491.0,273.5 480.0,275.0" fill="#333333" />
<g transform="matrix(1,-0.3230,0,1,323.5,299.4)"><rect x="0" y="0" width="122.0" height="11.3" fill="url(#jib)"/><path d="M0 1.100H122.0" stroke="#363c40" stroke-width="2.200"/><path d="M0 9.9H122.0" stroke="#474e52" stroke-width="2.800"/></g>
<polygon points="323.5,299.4 326.5,298.4 322.0,309.5 323.5,310.6" fill="#5a6064" />
<rect x="441.0" y="270.0" width="12.6" height="10.5" fill="#3a3d40" />
<rect x="442.3" y="262.0" width="12.2" height="10.0" fill="url(#mast)"/>
<line x1="443.0" y1="262.0" x2="443.0" y2="272.0" stroke="#3a4145" stroke-width="1.60" />
<line x1="453.8" y1="262.0" x2="453.8" y2="272.0" stroke="#3a4145" stroke-width="1.60" />
<rect x="225.0" y="228.0" width="12.0" height="302.5" fill="url(#mast)"/>
<line x1="225.7" y1="228.0" x2="225.7" y2="530.5" stroke="#3a4145" stroke-width="1.60" />
<line x1="236.3" y1="228.0" x2="236.3" y2="530.5" stroke="#3a4145" stroke-width="1.60" />
<polygon points="224.6,226.0 223.8,193.5 230.4,193.5 235.6,226.0" fill="url(#mast)" stroke="#3a4044" stroke-width="1.300"/>
<line x1="230.0" y1="194.8" x2="287.5" y2="200.2" stroke="#8a9296" stroke-width="1.20" />
<line x1="224.0" y1="195.0" x2="199.0" y2="232.0" stroke="#8a9296" stroke-width="1.00" />
<line x1="224.3" y1="197.0" x2="212.0" y2="230.0" stroke="#8a9296" stroke-width="0.90" />
<polygon points="190.0,236.6 226.0,226.5 226.0,229.6 190.0,239.8" fill="#4a4f53" />
<line x1="194.0" y1="235.0" x2="194.0" y2="230.5" stroke="#c8ccd0" stroke-width="0.70" />
<line x1="198.6" y1="233.8" x2="198.6" y2="229.2" stroke="#c8ccd0" stroke-width="0.70" />
<line x1="203.2" y1="232.5" x2="203.2" y2="228.0" stroke="#c8ccd0" stroke-width="0.70" />
<line x1="207.8" y1="231.2" x2="207.8" y2="226.8" stroke="#c8ccd0" stroke-width="0.70" />
<line x1="212.4" y1="230.0" x2="212.4" y2="225.5" stroke="#c8ccd0" stroke-width="0.70" />
<line x1="217.0" y1="228.8" x2="217.0" y2="224.2" stroke="#c8ccd0" stroke-width="0.70" />
<line x1="221.6" y1="227.5" x2="221.6" y2="223.0" stroke="#c8ccd0" stroke-width="0.70" />
<line x1="190.0" y1="232.0" x2="225.0" y2="222.5" stroke="#c0c6ca" stroke-width="0.70" />
<polygon points="190.0,239.5 203.5,238.5 203.5,253.5 190.0,256.5" fill="#2e2e2e" />
<g transform="matrix(1,-0.3185,0,1,234.5,216.7)"><rect x="0" y="0" width="121.5" height="12.0" fill="url(#jib)"/><path d="M0 1.100H121.5" stroke="#363c40" stroke-width="2.200"/><path d="M0 10.6H121.5" stroke="#474e52" stroke-width="2.800"/></g>
<polygon points="356.0,178.0 358.6,189.5 356.0,190.0" fill="#5a6064" />
<rect x="231.0" y="227.5" width="8.5" height="9.0" fill="#3a3d40" />
<rect x="225.0" y="224.0" width="12.0" height="6.0" fill="url(#mast)"/>
<line x1="225.7" y1="224.0" x2="225.7" y2="230.0" stroke="#3a4145" stroke-width="1.60" />
<line x1="236.3" y1="224.0" x2="236.3" y2="230.0" stroke="#3a4145" stroke-width="1.60" />
<polygon points="228.5,633.0 236.0,645.0 238.0,649.5 229.0,650.0" fill="#c8d0d4" fill-opacity=".8"/>
<line x1="228.0" y1="650.0" x2="228.0" y2="628.0" stroke="#cc2020" stroke-width="3.00" />
<polygon points="225.2,629.0 228.0,623.5 230.8,629.0" fill="#e02828" />
<line x1="228.5" y1="650.0" x2="239.5" y2="644.3" stroke="#2f9e3a" stroke-width="2.60" />
<line x1="227.0" y1="650.2" x2="241.0" y2="651.3" stroke="#1c30c0" stroke-width="3.60" />
<ellipse cx="242.5" cy="651.5" rx="2.2" ry="3.0" fill="#2438d0" />
<text x="227.500" y="619.500" font-family="Liberation Sans" font-size="9" fill="#d03a3a" textLength="5.500" lengthAdjust="spacingAndGlyphs">Z</text>
<text x="243.500" y="640.500" font-family="Liberation Sans" font-size="8" fill="#5ac86a">y</text>
<text x="247.300" y="652.500" font-family="Liberation Sans" font-size="9" fill="#3a5ad8" textLength="5.500" lengthAdjust="spacingAndGlyphs">X</text></svg>
</div></div>
<div id="status">
 <div class="abs" style="left:960px;top:5.500px;width:66px;text-align:center;white-space:nowrap;letter-spacing:-0.2px;font-size:8.200px">[黄瑛,BIM建模师]</div>
 <div class="abs" style="left:1049.500px;top:5.500px;white-space:nowrap;letter-spacing:-0.1px;font-size:8.200px">7.1.1.0</div>
</div>
</body></html>
